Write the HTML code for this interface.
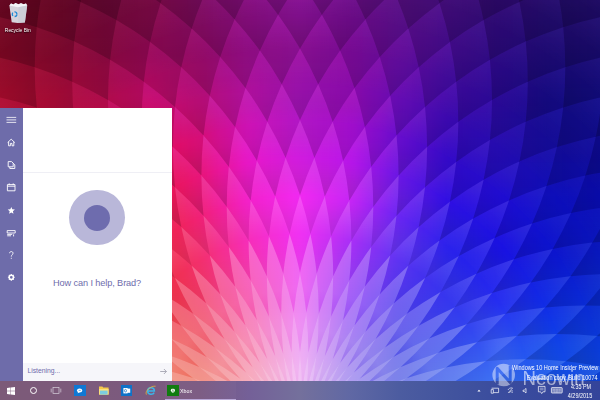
<!DOCTYPE html>
<html><head><meta charset="utf-8"><title>Desktop</title>
<style>
html,body{margin:0;padding:0;background:#000;}
body{width:600px;height:400px;overflow:hidden;position:relative;font-family:"Liberation Sans",sans-serif;}
#d{position:absolute;left:0;top:0;width:600px;height:400px;overflow:hidden;}
.a{position:absolute;}
.t{position:absolute;white-space:nowrap;line-height:1;}
</style></head><body><div id="d">
<svg width="600" height="400" viewBox="0 0 600 400" style="position:absolute;left:0;top:0">
<defs><filter id="bl" color-interpolation-filters="sRGB" x="-10%" y="-10%" width="120%" height="120%"><feGaussianBlur stdDeviation="9"/></filter>
<radialGradient id="gn0" gradientUnits="userSpaceOnUse" cx="300" cy="432.5" r="768.00"><stop offset="0.0523" stop-color="#fff" stop-opacity="0.000"/><stop offset="0.0836" stop-color="#fff" stop-opacity="0.233"/><stop offset="0.1564" stop-color="#fff" stop-opacity="0.389"/><stop offset="0.1564" stop-color="#fff" stop-opacity="0.000"/><stop offset="0.1871" stop-color="#fff" stop-opacity="0.162"/><stop offset="0.2588" stop-color="#fff" stop-opacity="0.270"/><stop offset="0.2588" stop-color="#000" stop-opacity="0.114"/><stop offset="0.3086" stop-color="#000" stop-opacity="0.000"/><stop offset="0.3086" stop-color="#fff" stop-opacity="0.000"/><stop offset="0.3584" stop-color="#fff" stop-opacity="0.146"/><stop offset="0.3584" stop-color="#000" stop-opacity="0.200"/><stop offset="0.4062" stop-color="#000" stop-opacity="0.000"/><stop offset="0.4062" stop-color="#fff" stop-opacity="0.000"/><stop offset="0.4540" stop-color="#fff" stop-opacity="0.064"/><stop offset="0.4540" stop-color="#000" stop-opacity="0.200"/><stop offset="0.4993" stop-color="#000" stop-opacity="0.000"/><stop offset="0.4993" stop-color="#fff" stop-opacity="0.000"/><stop offset="0.5446" stop-color="#fff" stop-opacity="0.030"/><stop offset="0.5446" stop-color="#000" stop-opacity="0.200"/><stop offset="0.5870" stop-color="#000" stop-opacity="0.000"/><stop offset="0.5870" stop-color="#fff" stop-opacity="0.000"/><stop offset="0.6293" stop-color="#fff" stop-opacity="0.030"/><stop offset="0.6293" stop-color="#000" stop-opacity="0.200"/><stop offset="0.6682" stop-color="#000" stop-opacity="0.000"/><stop offset="0.6682" stop-color="#fff" stop-opacity="0.000"/><stop offset="0.7071" stop-color="#fff" stop-opacity="0.030"/><stop offset="0.7071" stop-color="#000" stop-opacity="0.200"/><stop offset="0.7421" stop-color="#000" stop-opacity="0.000"/><stop offset="0.7421" stop-color="#fff" stop-opacity="0.000"/><stop offset="0.7771" stop-color="#fff" stop-opacity="0.030"/><stop offset="0.7771" stop-color="#000" stop-opacity="0.200"/><stop offset="0.8079" stop-color="#000" stop-opacity="0.000"/><stop offset="0.8079" stop-color="#fff" stop-opacity="0.000"/><stop offset="0.8387" stop-color="#fff" stop-opacity="0.030"/><stop offset="0.8387" stop-color="#000" stop-opacity="0.200"/><stop offset="0.8648" stop-color="#000" stop-opacity="0.000"/><stop offset="0.8648" stop-color="#fff" stop-opacity="0.000"/><stop offset="0.8910" stop-color="#fff" stop-opacity="0.030"/><stop offset="0.8910" stop-color="#000" stop-opacity="0.200"/><stop offset="0.9123" stop-color="#000" stop-opacity="0.000"/><stop offset="0.9123" stop-color="#fff" stop-opacity="0.000"/><stop offset="0.9336" stop-color="#fff" stop-opacity="0.030"/><stop offset="0.9336" stop-color="#000" stop-opacity="0.200"/><stop offset="0.9498" stop-color="#000" stop-opacity="0.000"/><stop offset="0.9498" stop-color="#fff" stop-opacity="0.000"/><stop offset="0.9659" stop-color="#fff" stop-opacity="0.030"/><stop offset="0.9659" stop-color="#000" stop-opacity="0.200"/><stop offset="0.9768" stop-color="#000" stop-opacity="0.000"/><stop offset="0.9768" stop-color="#fff" stop-opacity="0.000"/><stop offset="0.9877" stop-color="#fff" stop-opacity="0.030"/><stop offset="0.9877" stop-color="#000" stop-opacity="0.200"/><stop offset="0.9932" stop-color="#000" stop-opacity="0.000"/><stop offset="0.9932" stop-color="#fff" stop-opacity="0.000"/><stop offset="0.9986" stop-color="#fff" stop-opacity="0.030"/></radialGradient>
<radialGradient id="go0" gradientUnits="userSpaceOnUse" cx="300" cy="432.5" r="768.00"><stop offset="0.0523" stop-color="#fff" stop-opacity="0.000"/><stop offset="0.1044" stop-color="#fff" stop-opacity="0.000"/><stop offset="0.1564" stop-color="#fff" stop-opacity="0.000"/><stop offset="0.1564" stop-color="#fff" stop-opacity="0.000"/><stop offset="0.2076" stop-color="#fff" stop-opacity="0.000"/><stop offset="0.2588" stop-color="#fff" stop-opacity="0.000"/><stop offset="0.2588" stop-color="#fff" stop-opacity="0.000"/><stop offset="0.3086" stop-color="#fff" stop-opacity="0.000"/><stop offset="0.3584" stop-color="#fff" stop-opacity="0.090"/><stop offset="0.3584" stop-color="#fff" stop-opacity="0.000"/><stop offset="0.4062" stop-color="#fff" stop-opacity="0.000"/><stop offset="0.4540" stop-color="#fff" stop-opacity="0.200"/><stop offset="0.4540" stop-color="#fff" stop-opacity="0.000"/><stop offset="0.4993" stop-color="#fff" stop-opacity="0.000"/><stop offset="0.5446" stop-color="#fff" stop-opacity="0.200"/><stop offset="0.5446" stop-color="#fff" stop-opacity="0.000"/><stop offset="0.5870" stop-color="#fff" stop-opacity="0.000"/><stop offset="0.6293" stop-color="#fff" stop-opacity="0.200"/><stop offset="0.6293" stop-color="#fff" stop-opacity="0.000"/><stop offset="0.6682" stop-color="#fff" stop-opacity="0.000"/><stop offset="0.7071" stop-color="#fff" stop-opacity="0.200"/><stop offset="0.7071" stop-color="#fff" stop-opacity="0.000"/><stop offset="0.7421" stop-color="#fff" stop-opacity="0.000"/><stop offset="0.7771" stop-color="#fff" stop-opacity="0.200"/><stop offset="0.7771" stop-color="#fff" stop-opacity="0.000"/><stop offset="0.8079" stop-color="#fff" stop-opacity="0.000"/><stop offset="0.8387" stop-color="#fff" stop-opacity="0.200"/><stop offset="0.8387" stop-color="#fff" stop-opacity="0.000"/><stop offset="0.8648" stop-color="#fff" stop-opacity="0.000"/><stop offset="0.8910" stop-color="#fff" stop-opacity="0.200"/><stop offset="0.8910" stop-color="#fff" stop-opacity="0.000"/><stop offset="0.9123" stop-color="#fff" stop-opacity="0.000"/><stop offset="0.9336" stop-color="#fff" stop-opacity="0.200"/><stop offset="0.9336" stop-color="#fff" stop-opacity="0.000"/><stop offset="0.9498" stop-color="#fff" stop-opacity="0.000"/><stop offset="0.9659" stop-color="#fff" stop-opacity="0.200"/><stop offset="0.9659" stop-color="#fff" stop-opacity="0.000"/><stop offset="0.9768" stop-color="#fff" stop-opacity="0.000"/><stop offset="0.9877" stop-color="#fff" stop-opacity="0.200"/><stop offset="0.9877" stop-color="#fff" stop-opacity="0.000"/><stop offset="0.9932" stop-color="#fff" stop-opacity="0.000"/><stop offset="0.9986" stop-color="#fff" stop-opacity="0.200"/></radialGradient>
<path id="c0" d="M302.1,392.4A384,384,0,0,1,308.4,352.7A384,384,0,0,0,306.3,312.5A384,384,0,0,0,300.0,352.2A384,384,0,0,1,302.1,392.4ZM306.3,392.8A384,384,0,0,1,316.7,354.0A384,384,0,0,0,318.8,313.8A384,384,0,0,0,308.4,352.7A384,384,0,0,1,306.3,392.8ZM310.4,393.7A384,384,0,0,1,324.8,356.2A384,384,0,0,0,331.1,316.5A384,384,0,0,0,316.7,354.0A384,384,0,0,1,310.4,393.7ZM314.4,395.0A384,384,0,0,1,332.7,359.2A384,384,0,0,0,343.1,320.3A384,384,0,0,0,324.8,356.2A384,384,0,0,1,314.4,395.0ZM318.2,396.7A384,384,0,0,1,340.1,363.0A384,384,0,0,0,354.5,325.5A384,384,0,0,0,332.7,359.2A384,384,0,0,1,318.2,396.7ZM321.9,398.8A384,384,0,0,1,347.2,367.6A384,384,0,0,0,365.4,331.7A384,384,0,0,0,340.1,363.0A384,384,0,0,1,321.9,398.8ZM325.3,401.3A384,384,0,0,1,353.7,372.8A384,384,0,0,0,375.6,339.1A384,384,0,0,0,347.2,367.6A384,384,0,0,1,325.3,401.3ZM328.4,404.1A384,384,0,0,1,359.7,378.8A384,384,0,0,0,385.0,347.5A384,384,0,0,0,353.7,372.8A384,384,0,0,1,328.4,404.1ZM331.2,407.2A384,384,0,0,1,364.9,385.3A384,384,0,0,0,393.4,356.9A384,384,0,0,0,359.7,378.8A384,384,0,0,1,331.2,407.2ZM333.7,410.6A384,384,0,0,1,369.5,392.4A384,384,0,0,0,400.8,367.1A384,384,0,0,0,364.9,385.3A384,384,0,0,1,333.7,410.6ZM335.8,414.3A384,384,0,0,1,373.3,399.8A384,384,0,0,0,407.0,378.0A384,384,0,0,0,369.5,392.4A384,384,0,0,1,335.8,414.3ZM264.2,414.3A384,384,0,0,1,230.5,392.4A384,384,0,0,0,193.0,378.0A384,384,0,0,0,226.7,399.8A384,384,0,0,1,264.2,414.3ZM266.3,410.6A384,384,0,0,1,235.1,385.3A384,384,0,0,0,199.2,367.1A384,384,0,0,0,230.5,392.4A384,384,0,0,1,266.3,410.6ZM268.8,407.2A384,384,0,0,1,240.3,378.8A384,384,0,0,0,206.6,356.9A384,384,0,0,0,235.1,385.3A384,384,0,0,1,268.8,407.2ZM271.6,404.1A384,384,0,0,1,246.3,372.8A384,384,0,0,0,215.0,347.5A384,384,0,0,0,240.3,378.8A384,384,0,0,1,271.6,404.1ZM274.7,401.3A384,384,0,0,1,252.8,367.6A384,384,0,0,0,224.4,339.1A384,384,0,0,0,246.3,372.8A384,384,0,0,1,274.7,401.3ZM278.1,398.8A384,384,0,0,1,259.9,363.0A384,384,0,0,0,234.6,331.7A384,384,0,0,0,252.8,367.6A384,384,0,0,1,278.1,398.8ZM281.8,396.7A384,384,0,0,1,267.3,359.2A384,384,0,0,0,245.5,325.5A384,384,0,0,0,259.9,363.0A384,384,0,0,1,281.8,396.7ZM285.6,395.0A384,384,0,0,1,275.2,356.2A384,384,0,0,0,256.9,320.3A384,384,0,0,0,267.3,359.2A384,384,0,0,1,285.6,395.0ZM289.6,393.7A384,384,0,0,1,283.3,354.0A384,384,0,0,0,268.9,316.5A384,384,0,0,0,275.2,356.2A384,384,0,0,1,289.6,393.7ZM293.7,392.8A384,384,0,0,1,291.6,352.7A384,384,0,0,0,281.2,313.8A384,384,0,0,0,283.3,354.0A384,384,0,0,1,293.7,392.8ZM297.9,392.4A384,384,0,0,1,300.0,352.2A384,384,0,0,0,293.7,312.5A384,384,0,0,0,291.6,352.7A384,384,0,0,1,297.9,392.4ZM306.3,312.5A384,384,0,0,1,316.7,273.7A384,384,0,0,0,310.4,234.0A384,384,0,0,0,300.0,272.8A384,384,0,0,1,306.3,312.5ZM318.8,313.8A384,384,0,0,1,333.2,276.3A384,384,0,0,0,331.1,236.2A384,384,0,0,0,316.7,273.7A384,384,0,0,1,318.8,313.8ZM331.1,316.5A384,384,0,0,1,349.3,280.6A384,384,0,0,0,351.4,240.5A384,384,0,0,0,333.2,276.3A384,384,0,0,1,331.1,316.5ZM343.1,320.3A384,384,0,0,1,364.9,286.6A384,384,0,0,0,371.2,246.9A384,384,0,0,0,349.3,280.6A384,384,0,0,1,343.1,320.3ZM354.5,325.5A384,384,0,0,1,379.8,294.2A384,384,0,0,0,390.2,255.4A384,384,0,0,0,364.9,286.6A384,384,0,0,1,354.5,325.5ZM365.4,331.7A384,384,0,0,1,393.9,303.3A384,384,0,0,0,408.3,265.8A384,384,0,0,0,379.8,294.2A384,384,0,0,1,365.4,331.7ZM375.6,339.1A384,384,0,0,1,406.8,313.8A384,384,0,0,0,425.1,278.0A384,384,0,0,0,393.9,303.3A384,384,0,0,1,375.6,339.1ZM385.0,347.5A384,384,0,0,1,418.7,325.7A384,384,0,0,0,440.6,291.9A384,384,0,0,0,406.8,313.8A384,384,0,0,1,385.0,347.5ZM393.4,356.9A384,384,0,0,1,429.2,338.6A384,384,0,0,0,454.5,307.4A384,384,0,0,0,418.7,325.7A384,384,0,0,1,393.4,356.9ZM400.8,367.1A384,384,0,0,1,438.3,352.7A384,384,0,0,0,466.7,324.2A384,384,0,0,0,429.2,338.6A384,384,0,0,1,400.8,367.1ZM407.0,378.0A384,384,0,0,1,445.9,367.6A384,384,0,0,0,477.1,342.3A384,384,0,0,0,438.3,352.7A384,384,0,0,1,407.0,378.0ZM412.2,389.4A384,384,0,0,1,451.9,383.2A384,384,0,0,0,485.6,361.3A384,384,0,0,0,445.9,367.6A384,384,0,0,1,412.2,389.4ZM416.0,401.4A384,384,0,0,1,456.2,399.3A384,384,0,0,0,492.0,381.1A384,384,0,0,0,451.9,383.2A384,384,0,0,1,416.0,401.4ZM184.0,401.4A384,384,0,0,1,148.1,383.2A384,384,0,0,0,108.0,381.1A384,384,0,0,0,143.8,399.3A384,384,0,0,1,184.0,401.4ZM187.8,389.4A384,384,0,0,1,154.1,367.6A384,384,0,0,0,114.4,361.3A384,384,0,0,0,148.1,383.2A384,384,0,0,1,187.8,389.4ZM193.0,378.0A384,384,0,0,1,161.7,352.7A384,384,0,0,0,122.9,342.3A384,384,0,0,0,154.1,367.6A384,384,0,0,1,193.0,378.0ZM199.2,367.1A384,384,0,0,1,170.8,338.6A384,384,0,0,0,133.3,324.2A384,384,0,0,0,161.7,352.7A384,384,0,0,1,199.2,367.1ZM206.6,356.9A384,384,0,0,1,181.3,325.7A384,384,0,0,0,145.5,307.4A384,384,0,0,0,170.8,338.6A384,384,0,0,1,206.6,356.9ZM215.0,347.5A384,384,0,0,1,193.2,313.8A384,384,0,0,0,159.4,291.9A384,384,0,0,0,181.3,325.7A384,384,0,0,1,215.0,347.5ZM224.4,339.1A384,384,0,0,1,206.1,303.3A384,384,0,0,0,174.9,278.0A384,384,0,0,0,193.2,313.8A384,384,0,0,1,224.4,339.1ZM234.6,331.7A384,384,0,0,1,220.2,294.2A384,384,0,0,0,191.7,265.8A384,384,0,0,0,206.1,303.3A384,384,0,0,1,234.6,331.7ZM245.5,325.5A384,384,0,0,1,235.1,286.6A384,384,0,0,0,209.8,255.4A384,384,0,0,0,220.2,294.2A384,384,0,0,1,245.5,325.5ZM256.9,320.3A384,384,0,0,1,250.7,280.6A384,384,0,0,0,228.8,246.9A384,384,0,0,0,235.1,286.6A384,384,0,0,1,256.9,320.3ZM268.9,316.5A384,384,0,0,1,266.8,276.3A384,384,0,0,0,248.6,240.5A384,384,0,0,0,250.7,280.6A384,384,0,0,1,268.9,316.5ZM281.2,313.8A384,384,0,0,1,283.3,273.7A384,384,0,0,0,268.9,236.2A384,384,0,0,0,266.8,276.3A384,384,0,0,1,281.2,313.8ZM293.7,312.5A384,384,0,0,1,300.0,272.8A384,384,0,0,0,289.6,234.0A384,384,0,0,0,283.3,273.7A384,384,0,0,1,293.7,312.5ZM310.4,234.0A384,384,0,0,1,324.8,196.5A384,384,0,0,0,314.4,157.7A384,384,0,0,0,300.0,195.2A384,384,0,0,1,310.4,234.0ZM331.1,236.2A384,384,0,0,1,349.3,200.4A384,384,0,0,0,343.1,160.7A384,384,0,0,0,324.8,196.5A384,384,0,0,1,331.1,236.2ZM351.4,240.5A384,384,0,0,1,373.3,206.8A384,384,0,0,0,371.2,166.7A384,384,0,0,0,349.3,200.4A384,384,0,0,1,351.4,240.5ZM371.2,246.9A384,384,0,0,1,396.5,215.7A384,384,0,0,0,398.6,175.6A384,384,0,0,0,373.3,206.8A384,384,0,0,1,371.2,246.9ZM390.2,255.4A384,384,0,0,1,418.7,227.0A384,384,0,0,0,425.0,187.3A384,384,0,0,0,396.5,215.7A384,384,0,0,1,390.2,255.4ZM408.3,265.8A384,384,0,0,1,439.5,240.5A384,384,0,0,0,449.9,201.7A384,384,0,0,0,418.7,227.0A384,384,0,0,1,408.3,265.8ZM425.1,278.0A384,384,0,0,1,458.8,256.1A384,384,0,0,0,473.2,218.6A384,384,0,0,0,439.5,240.5A384,384,0,0,1,425.1,278.0ZM440.6,291.9A384,384,0,0,1,476.4,273.7A384,384,0,0,0,494.6,237.9A384,384,0,0,0,458.8,256.1A384,384,0,0,1,440.6,291.9ZM454.5,307.4A384,384,0,0,1,492.0,293.0A384,384,0,0,0,513.9,259.3A384,384,0,0,0,476.4,273.7A384,384,0,0,1,454.5,307.4ZM466.7,324.2A384,384,0,0,1,505.5,313.8A384,384,0,0,0,530.8,282.6A384,384,0,0,0,492.0,293.0A384,384,0,0,1,466.7,324.2ZM477.1,342.3A384,384,0,0,1,516.8,336.0A384,384,0,0,0,545.2,307.5A384,384,0,0,0,505.5,313.8A384,384,0,0,1,477.1,342.3ZM485.6,361.3A384,384,0,0,1,525.7,359.2A384,384,0,0,0,556.9,333.9A384,384,0,0,0,516.8,336.0A384,384,0,0,1,485.6,361.3ZM492.0,381.1A384,384,0,0,1,532.1,383.2A384,384,0,0,0,565.8,361.3A384,384,0,0,0,525.7,359.2A384,384,0,0,1,492.0,381.1ZM108.0,381.1A384,384,0,0,1,74.3,359.2A384,384,0,0,0,34.2,361.3A384,384,0,0,0,67.9,383.2A384,384,0,0,1,108.0,381.1ZM114.4,361.3A384,384,0,0,1,83.2,336.0A384,384,0,0,0,43.1,333.9A384,384,0,0,0,74.3,359.2A384,384,0,0,1,114.4,361.3ZM122.9,342.3A384,384,0,0,1,94.5,313.8A384,384,0,0,0,54.8,307.5A384,384,0,0,0,83.2,336.0A384,384,0,0,1,122.9,342.3ZM133.3,324.2A384,384,0,0,1,108.0,293.0A384,384,0,0,0,69.2,282.6A384,384,0,0,0,94.5,313.8A384,384,0,0,1,133.3,324.2ZM145.5,307.4A384,384,0,0,1,123.6,273.7A384,384,0,0,0,86.1,259.3A384,384,0,0,0,108.0,293.0A384,384,0,0,1,145.5,307.4ZM159.4,291.9A384,384,0,0,1,141.2,256.1A384,384,0,0,0,105.4,237.9A384,384,0,0,0,123.6,273.7A384,384,0,0,1,159.4,291.9ZM174.9,278.0A384,384,0,0,1,160.5,240.5A384,384,0,0,0,126.8,218.6A384,384,0,0,0,141.2,256.1A384,384,0,0,1,174.9,278.0ZM191.7,265.8A384,384,0,0,1,181.3,227.0A384,384,0,0,0,150.1,201.7A384,384,0,0,0,160.5,240.5A384,384,0,0,1,191.7,265.8ZM209.8,255.4A384,384,0,0,1,203.5,215.7A384,384,0,0,0,175.0,187.3A384,384,0,0,0,181.3,227.0A384,384,0,0,1,209.8,255.4ZM228.8,246.9A384,384,0,0,1,226.7,206.8A384,384,0,0,0,201.4,175.6A384,384,0,0,0,203.5,215.7A384,384,0,0,1,228.8,246.9ZM248.6,240.5A384,384,0,0,1,250.7,200.4A384,384,0,0,0,228.8,166.7A384,384,0,0,0,226.7,206.8A384,384,0,0,1,248.6,240.5ZM268.9,236.2A384,384,0,0,1,275.2,196.5A384,384,0,0,0,256.9,160.7A384,384,0,0,0,250.7,200.4A384,384,0,0,1,268.9,236.2ZM289.6,234.0A384,384,0,0,1,300.0,195.2A384,384,0,0,0,285.6,157.7A384,384,0,0,0,275.2,196.5A384,384,0,0,1,289.6,234.0ZM314.4,157.7A384,384,0,0,1,332.7,121.8A384,384,0,0,0,318.2,84.3A384,384,0,0,0,300.0,120.1A384,384,0,0,1,314.4,157.7ZM343.1,160.7A384,384,0,0,1,364.9,127.0A384,384,0,0,0,354.5,88.1A384,384,0,0,0,332.7,121.8A384,384,0,0,1,343.1,160.7ZM371.2,166.7A384,384,0,0,1,396.5,135.4A384,384,0,0,0,390.2,95.7A384,384,0,0,0,364.9,127.0A384,384,0,0,1,371.2,166.7ZM398.6,175.6A384,384,0,0,1,427.1,147.1A384,384,0,0,0,425.0,107.0A384,384,0,0,0,396.5,135.4A384,384,0,0,1,398.6,175.6ZM425.0,187.3A384,384,0,0,1,456.2,162.0A384,384,0,0,0,458.3,121.8A384,384,0,0,0,427.1,147.1A384,384,0,0,1,425.0,187.3ZM449.9,201.7A384,384,0,0,1,483.6,179.8A384,384,0,0,0,489.9,140.1A384,384,0,0,0,456.2,162.0A384,384,0,0,1,449.9,201.7ZM473.2,218.6A384,384,0,0,1,509.0,200.4A384,384,0,0,0,519.4,161.5A384,384,0,0,0,483.6,179.8A384,384,0,0,1,473.2,218.6ZM494.6,237.9A384,384,0,0,1,532.1,223.5A384,384,0,0,0,546.5,186.0A384,384,0,0,0,509.0,200.4A384,384,0,0,1,494.6,237.9ZM513.9,259.3A384,384,0,0,1,552.7,248.9A384,384,0,0,0,571.0,213.1A384,384,0,0,0,532.1,223.5A384,384,0,0,1,513.9,259.3ZM530.8,282.6A384,384,0,0,1,570.5,276.3A384,384,0,0,0,592.4,242.6A384,384,0,0,0,552.7,248.9A384,384,0,0,1,530.8,282.6ZM545.2,307.5A384,384,0,0,1,585.4,305.4A384,384,0,0,0,610.7,274.2A384,384,0,0,0,570.5,276.3A384,384,0,0,1,545.2,307.5ZM556.9,333.9A384,384,0,0,1,597.1,336.0A384,384,0,0,0,625.5,307.5A384,384,0,0,0,585.4,305.4A384,384,0,0,1,556.9,333.9ZM565.8,361.3A384,384,0,0,1,605.5,367.6A384,384,0,0,0,636.8,342.3A384,384,0,0,0,597.1,336.0A384,384,0,0,1,565.8,361.3ZM571.8,389.4A384,384,0,0,1,610.7,399.8A384,384,0,0,0,644.4,378.0A384,384,0,0,0,605.5,367.6A384,384,0,0,1,571.8,389.4ZM28.2,389.4A384,384,0,0,1,-5.5,367.6A384,384,0,0,0,-44.4,378.0A384,384,0,0,0,-10.7,399.8A384,384,0,0,1,28.2,389.4ZM34.2,361.3A384,384,0,0,1,2.9,336.0A384,384,0,0,0,-36.8,342.3A384,384,0,0,0,-5.5,367.6A384,384,0,0,1,34.2,361.3ZM43.1,333.9A384,384,0,0,1,14.6,305.4A384,384,0,0,0,-25.5,307.5A384,384,0,0,0,2.9,336.0A384,384,0,0,1,43.1,333.9ZM54.8,307.5A384,384,0,0,1,29.5,276.3A384,384,0,0,0,-10.7,274.2A384,384,0,0,0,14.6,305.4A384,384,0,0,1,54.8,307.5ZM69.2,282.6A384,384,0,0,1,47.3,248.9A384,384,0,0,0,7.6,242.6A384,384,0,0,0,29.5,276.3A384,384,0,0,1,69.2,282.6ZM86.1,259.3A384,384,0,0,1,67.9,223.5A384,384,0,0,0,29.0,213.1A384,384,0,0,0,47.3,248.9A384,384,0,0,1,86.1,259.3ZM105.4,237.9A384,384,0,0,1,91.0,200.4A384,384,0,0,0,53.5,186.0A384,384,0,0,0,67.9,223.5A384,384,0,0,1,105.4,237.9ZM126.8,218.6A384,384,0,0,1,116.4,179.8A384,384,0,0,0,80.6,161.5A384,384,0,0,0,91.0,200.4A384,384,0,0,1,126.8,218.6ZM150.1,201.7A384,384,0,0,1,143.8,162.0A384,384,0,0,0,110.1,140.1A384,384,0,0,0,116.4,179.8A384,384,0,0,1,150.1,201.7ZM175.0,187.3A384,384,0,0,1,172.9,147.1A384,384,0,0,0,141.7,121.8A384,384,0,0,0,143.8,162.0A384,384,0,0,1,175.0,187.3ZM201.4,175.6A384,384,0,0,1,203.5,135.4A384,384,0,0,0,175.0,107.0A384,384,0,0,0,172.9,147.1A384,384,0,0,1,201.4,175.6ZM228.8,166.7A384,384,0,0,1,235.1,127.0A384,384,0,0,0,209.8,95.7A384,384,0,0,0,203.5,135.4A384,384,0,0,1,228.8,166.7ZM256.9,160.7A384,384,0,0,1,267.3,121.8A384,384,0,0,0,245.5,88.1A384,384,0,0,0,235.1,127.0A384,384,0,0,1,256.9,160.7ZM285.6,157.7A384,384,0,0,1,300.0,120.1A384,384,0,0,0,281.8,84.3A384,384,0,0,0,267.3,121.8A384,384,0,0,1,285.6,157.7ZM318.2,84.3A384,384,0,0,1,340.1,50.6A384,384,0,0,0,321.9,14.8A384,384,0,0,0,300.0,48.5A384,384,0,0,1,318.2,84.3ZM354.5,88.1A384,384,0,0,1,379.8,56.9A384,384,0,0,0,365.4,19.4A384,384,0,0,0,340.1,50.6A384,384,0,0,1,354.5,88.1ZM390.2,95.7A384,384,0,0,1,418.7,67.3A384,384,0,0,0,408.3,28.5A384,384,0,0,0,379.8,56.9A384,384,0,0,1,390.2,95.7ZM425.0,107.0A384,384,0,0,1,456.2,81.7A384,384,0,0,0,449.9,42.0A384,384,0,0,0,418.7,67.3A384,384,0,0,1,425.0,107.0ZM458.3,121.8A384,384,0,0,1,492.0,99.9A384,384,0,0,0,489.9,59.8A384,384,0,0,0,456.2,81.7A384,384,0,0,1,458.3,121.8ZM489.9,140.1A384,384,0,0,1,525.7,121.8A384,384,0,0,0,527.8,81.7A384,384,0,0,0,492.0,99.9A384,384,0,0,1,489.9,140.1ZM519.4,161.5A384,384,0,0,1,556.9,147.1A384,384,0,0,0,563.2,107.4A384,384,0,0,0,525.7,121.8A384,384,0,0,1,519.4,161.5ZM546.5,186.0A384,384,0,0,1,585.4,175.6A384,384,0,0,0,595.8,136.7A384,384,0,0,0,556.9,147.1A384,384,0,0,1,546.5,186.0ZM571.0,213.1A384,384,0,0,1,610.7,206.8A384,384,0,0,0,625.1,169.3A384,384,0,0,0,585.4,175.6A384,384,0,0,1,571.0,213.1ZM592.4,242.6A384,384,0,0,1,632.6,240.5A384,384,0,0,0,650.8,204.7A384,384,0,0,0,610.7,206.8A384,384,0,0,1,592.4,242.6ZM7.6,242.6A384,384,0,0,1,-10.7,206.8A384,384,0,0,0,-50.8,204.7A384,384,0,0,0,-32.6,240.5A384,384,0,0,1,7.6,242.6ZM29.0,213.1A384,384,0,0,1,14.6,175.6A384,384,0,0,0,-25.1,169.3A384,384,0,0,0,-10.7,206.8A384,384,0,0,1,29.0,213.1ZM53.5,186.0A384,384,0,0,1,43.1,147.1A384,384,0,0,0,4.2,136.7A384,384,0,0,0,14.6,175.6A384,384,0,0,1,53.5,186.0ZM80.6,161.5A384,384,0,0,1,74.3,121.8A384,384,0,0,0,36.8,107.4A384,384,0,0,0,43.1,147.1A384,384,0,0,1,80.6,161.5ZM110.1,140.1A384,384,0,0,1,108.0,99.9A384,384,0,0,0,72.2,81.7A384,384,0,0,0,74.3,121.8A384,384,0,0,1,110.1,140.1ZM141.7,121.8A384,384,0,0,1,143.8,81.7A384,384,0,0,0,110.1,59.8A384,384,0,0,0,108.0,99.9A384,384,0,0,1,141.7,121.8ZM175.0,107.0A384,384,0,0,1,181.3,67.3A384,384,0,0,0,150.1,42.0A384,384,0,0,0,143.8,81.7A384,384,0,0,1,175.0,107.0ZM209.8,95.7A384,384,0,0,1,220.2,56.9A384,384,0,0,0,191.7,28.5A384,384,0,0,0,181.3,67.3A384,384,0,0,1,209.8,95.7ZM245.5,88.1A384,384,0,0,1,259.9,50.6A384,384,0,0,0,234.6,19.4A384,384,0,0,0,220.2,56.9A384,384,0,0,1,245.5,88.1ZM281.8,84.3A384,384,0,0,1,300.0,48.5A384,384,0,0,0,278.1,14.8A384,384,0,0,0,259.9,50.6A384,384,0,0,1,281.8,84.3ZM321.9,14.8A384,384,0,0,1,347.2,-16.4A384,384,0,0,0,325.3,-50.2A384,384,0,0,0,300.0,-18.9A384,384,0,0,1,321.9,14.8ZM365.4,19.4A384,384,0,0,1,393.9,-9.1A384,384,0,0,0,375.6,-44.9A384,384,0,0,0,347.2,-16.4A384,384,0,0,1,365.4,19.4ZM408.3,28.5A384,384,0,0,1,439.5,3.2A384,384,0,0,0,425.1,-34.3A384,384,0,0,0,393.9,-9.1A384,384,0,0,1,408.3,28.5ZM449.9,42.0A384,384,0,0,1,483.6,20.1A384,384,0,0,0,473.2,-18.7A384,384,0,0,0,439.5,3.2A384,384,0,0,1,449.9,42.0ZM489.9,59.8A384,384,0,0,1,525.7,41.6A384,384,0,0,0,519.4,1.9A384,384,0,0,0,483.6,20.1A384,384,0,0,1,489.9,59.8ZM527.8,81.7A384,384,0,0,1,565.3,67.3A384,384,0,0,0,563.2,27.2A384,384,0,0,0,525.7,41.6A384,384,0,0,1,527.8,81.7ZM563.2,107.4A384,384,0,0,1,602.1,97.0A384,384,0,0,0,604.2,56.9A384,384,0,0,0,565.3,67.3A384,384,0,0,1,563.2,107.4ZM595.8,136.7A384,384,0,0,1,635.5,130.4A384,384,0,0,0,641.8,90.7A384,384,0,0,0,602.1,97.0A384,384,0,0,1,595.8,136.7ZM4.2,136.7A384,384,0,0,1,-2.1,97.0A384,384,0,0,0,-41.8,90.7A384,384,0,0,0,-35.5,130.4A384,384,0,0,1,4.2,136.7ZM36.8,107.4A384,384,0,0,1,34.7,67.3A384,384,0,0,0,-4.2,56.9A384,384,0,0,0,-2.1,97.0A384,384,0,0,1,36.8,107.4ZM72.2,81.7A384,384,0,0,1,74.3,41.6A384,384,0,0,0,36.8,27.2A384,384,0,0,0,34.7,67.3A384,384,0,0,1,72.2,81.7ZM110.1,59.8A384,384,0,0,1,116.4,20.1A384,384,0,0,0,80.6,1.9A384,384,0,0,0,74.3,41.6A384,384,0,0,1,110.1,59.8ZM150.1,42.0A384,384,0,0,1,160.5,3.2A384,384,0,0,0,126.8,-18.7A384,384,0,0,0,116.4,20.1A384,384,0,0,1,150.1,42.0ZM191.7,28.5A384,384,0,0,1,206.1,-9.1A384,384,0,0,0,174.9,-34.3A384,384,0,0,0,160.5,3.2A384,384,0,0,1,191.7,28.5ZM234.6,19.4A384,384,0,0,1,252.8,-16.4A384,384,0,0,0,224.4,-44.9A384,384,0,0,0,206.1,-9.1A384,384,0,0,1,234.6,19.4ZM278.1,14.8A384,384,0,0,1,300.0,-18.9A384,384,0,0,0,274.7,-50.2A384,384,0,0,0,252.8,-16.4A384,384,0,0,1,278.1,14.8ZM519.4,1.9A384,384,0,0,1,556.9,-12.5A384,384,0,0,0,546.5,-51.4A384,384,0,0,0,509.0,-37.0A384,384,0,0,1,519.4,1.9ZM563.2,27.2A384,384,0,0,1,602.1,16.8A384,384,0,0,0,595.8,-22.9A384,384,0,0,0,556.9,-12.5A384,384,0,0,1,563.2,27.2ZM36.8,27.2A384,384,0,0,1,43.1,-12.5A384,384,0,0,0,4.2,-22.9A384,384,0,0,0,-2.1,16.8A384,384,0,0,1,36.8,27.2ZM80.6,1.9A384,384,0,0,1,91.0,-37.0A384,384,0,0,0,53.5,-51.4A384,384,0,0,0,43.1,-12.5A384,384,0,0,1,80.6,1.9Z"/>
<radialGradient id="gn1" gradientUnits="userSpaceOnUse" cx="300" cy="432.5" r="768.00"><stop offset="0.0000" stop-color="#fff" stop-opacity="0.000"/><stop offset="0.0314" stop-color="#fff" stop-opacity="0.240"/><stop offset="0.1045" stop-color="#fff" stop-opacity="0.400"/><stop offset="0.1045" stop-color="#fff" stop-opacity="0.000"/><stop offset="0.1355" stop-color="#fff" stop-opacity="0.215"/><stop offset="0.2079" stop-color="#fff" stop-opacity="0.358"/><stop offset="0.2079" stop-color="#000" stop-opacity="0.037"/><stop offset="0.2585" stop-color="#000" stop-opacity="0.000"/><stop offset="0.2585" stop-color="#fff" stop-opacity="0.000"/><stop offset="0.3090" stop-color="#fff" stop-opacity="0.191"/><stop offset="0.3090" stop-color="#000" stop-opacity="0.190"/><stop offset="0.3579" stop-color="#000" stop-opacity="0.000"/><stop offset="0.3579" stop-color="#fff" stop-opacity="0.000"/><stop offset="0.4067" stop-color="#fff" stop-opacity="0.104"/><stop offset="0.4067" stop-color="#000" stop-opacity="0.200"/><stop offset="0.4534" stop-color="#000" stop-opacity="0.000"/><stop offset="0.4534" stop-color="#fff" stop-opacity="0.000"/><stop offset="0.5000" stop-color="#fff" stop-opacity="0.030"/><stop offset="0.5000" stop-color="#000" stop-opacity="0.200"/><stop offset="0.5439" stop-color="#000" stop-opacity="0.000"/><stop offset="0.5439" stop-color="#fff" stop-opacity="0.000"/><stop offset="0.5878" stop-color="#fff" stop-opacity="0.030"/><stop offset="0.5878" stop-color="#000" stop-opacity="0.200"/><stop offset="0.6285" stop-color="#000" stop-opacity="0.000"/><stop offset="0.6285" stop-color="#fff" stop-opacity="0.000"/><stop offset="0.6691" stop-color="#fff" stop-opacity="0.030"/><stop offset="0.6691" stop-color="#000" stop-opacity="0.200"/><stop offset="0.7061" stop-color="#000" stop-opacity="0.000"/><stop offset="0.7061" stop-color="#fff" stop-opacity="0.000"/><stop offset="0.7431" stop-color="#fff" stop-opacity="0.030"/><stop offset="0.7431" stop-color="#000" stop-opacity="0.200"/><stop offset="0.7761" stop-color="#000" stop-opacity="0.000"/><stop offset="0.7761" stop-color="#fff" stop-opacity="0.000"/><stop offset="0.8090" stop-color="#fff" stop-opacity="0.030"/><stop offset="0.8090" stop-color="#000" stop-opacity="0.200"/><stop offset="0.8375" stop-color="#000" stop-opacity="0.000"/><stop offset="0.8375" stop-color="#fff" stop-opacity="0.000"/><stop offset="0.8660" stop-color="#fff" stop-opacity="0.030"/><stop offset="0.8660" stop-color="#000" stop-opacity="0.200"/><stop offset="0.8898" stop-color="#000" stop-opacity="0.000"/><stop offset="0.8898" stop-color="#fff" stop-opacity="0.000"/><stop offset="0.9135" stop-color="#fff" stop-opacity="0.030"/><stop offset="0.9135" stop-color="#000" stop-opacity="0.200"/><stop offset="0.9323" stop-color="#000" stop-opacity="0.000"/><stop offset="0.9323" stop-color="#fff" stop-opacity="0.000"/><stop offset="0.9511" stop-color="#fff" stop-opacity="0.030"/><stop offset="0.9511" stop-color="#000" stop-opacity="0.200"/><stop offset="0.9646" stop-color="#000" stop-opacity="0.000"/><stop offset="0.9646" stop-color="#fff" stop-opacity="0.000"/><stop offset="0.9781" stop-color="#fff" stop-opacity="0.030"/><stop offset="0.9781" stop-color="#000" stop-opacity="0.200"/><stop offset="0.9863" stop-color="#000" stop-opacity="0.000"/><stop offset="0.9863" stop-color="#fff" stop-opacity="0.000"/><stop offset="0.9945" stop-color="#fff" stop-opacity="0.030"/><stop offset="0.9945" stop-color="#000" stop-opacity="0.200"/><stop offset="0.9973" stop-color="#000" stop-opacity="0.000"/><stop offset="0.9973" stop-color="#fff" stop-opacity="0.000"/><stop offset="1.0000" stop-color="#fff" stop-opacity="0.030"/></radialGradient>
<radialGradient id="go1" gradientUnits="userSpaceOnUse" cx="300" cy="432.5" r="768.00"><stop offset="0.0000" stop-color="#fff" stop-opacity="0.000"/><stop offset="0.0523" stop-color="#fff" stop-opacity="0.000"/><stop offset="0.1045" stop-color="#fff" stop-opacity="0.000"/><stop offset="0.1045" stop-color="#fff" stop-opacity="0.000"/><stop offset="0.1562" stop-color="#fff" stop-opacity="0.000"/><stop offset="0.2079" stop-color="#fff" stop-opacity="0.000"/><stop offset="0.2079" stop-color="#fff" stop-opacity="0.000"/><stop offset="0.2585" stop-color="#fff" stop-opacity="0.000"/><stop offset="0.3090" stop-color="#fff" stop-opacity="0.015"/><stop offset="0.3090" stop-color="#fff" stop-opacity="0.000"/><stop offset="0.3579" stop-color="#fff" stop-opacity="0.000"/><stop offset="0.4067" stop-color="#fff" stop-opacity="0.165"/><stop offset="0.4067" stop-color="#fff" stop-opacity="0.000"/><stop offset="0.4534" stop-color="#fff" stop-opacity="0.000"/><stop offset="0.5000" stop-color="#fff" stop-opacity="0.200"/><stop offset="0.5000" stop-color="#fff" stop-opacity="0.000"/><stop offset="0.5439" stop-color="#fff" stop-opacity="0.000"/><stop offset="0.5878" stop-color="#fff" stop-opacity="0.200"/><stop offset="0.5878" stop-color="#fff" stop-opacity="0.000"/><stop offset="0.6285" stop-color="#fff" stop-opacity="0.000"/><stop offset="0.6691" stop-color="#fff" stop-opacity="0.200"/><stop offset="0.6691" stop-color="#fff" stop-opacity="0.000"/><stop offset="0.7061" stop-color="#fff" stop-opacity="0.000"/><stop offset="0.7431" stop-color="#fff" stop-opacity="0.200"/><stop offset="0.7431" stop-color="#fff" stop-opacity="0.000"/><stop offset="0.7761" stop-color="#fff" stop-opacity="0.000"/><stop offset="0.8090" stop-color="#fff" stop-opacity="0.200"/><stop offset="0.8090" stop-color="#fff" stop-opacity="0.000"/><stop offset="0.8375" stop-color="#fff" stop-opacity="0.000"/><stop offset="0.8660" stop-color="#fff" stop-opacity="0.200"/><stop offset="0.8660" stop-color="#fff" stop-opacity="0.000"/><stop offset="0.8898" stop-color="#fff" stop-opacity="0.000"/><stop offset="0.9135" stop-color="#fff" stop-opacity="0.200"/><stop offset="0.9135" stop-color="#fff" stop-opacity="0.000"/><stop offset="0.9323" stop-color="#fff" stop-opacity="0.000"/><stop offset="0.9511" stop-color="#fff" stop-opacity="0.200"/><stop offset="0.9511" stop-color="#fff" stop-opacity="0.000"/><stop offset="0.9646" stop-color="#fff" stop-opacity="0.000"/><stop offset="0.9781" stop-color="#fff" stop-opacity="0.200"/><stop offset="0.9781" stop-color="#fff" stop-opacity="0.000"/><stop offset="0.9863" stop-color="#fff" stop-opacity="0.000"/><stop offset="0.9945" stop-color="#fff" stop-opacity="0.200"/><stop offset="0.9945" stop-color="#fff" stop-opacity="0.000"/><stop offset="0.9973" stop-color="#fff" stop-opacity="0.000"/><stop offset="1.0000" stop-color="#fff" stop-opacity="0.200"/></radialGradient>
<path id="c1" d="M300.0,432.5A384,384,0,0,1,302.1,392.4A384,384,0,0,0,300.0,352.2A384,384,0,0,0,297.9,392.4A384,384,0,0,1,300.0,432.5ZM300.0,432.5A384,384,0,0,0,306.3,392.8A384,384,0,0,0,308.4,352.7A384,384,0,0,0,302.1,392.4A384,384,0,0,0,300.0,432.5ZM300.0,432.5A384,384,0,0,0,310.4,393.7A384,384,0,0,0,316.7,354.0A384,384,0,0,0,306.3,392.8A384,384,0,0,1,300.0,432.5ZM300.0,432.5A384,384,0,0,1,314.4,395.0A384,384,0,0,0,324.8,356.2A384,384,0,0,0,310.4,393.7A384,384,0,0,1,300.0,432.5ZM300.0,432.5A384,384,0,0,1,318.2,396.7A384,384,0,0,0,332.7,359.2A384,384,0,0,0,314.4,395.0A384,384,0,0,0,300.0,432.5ZM300.0,432.5A384,384,0,0,1,321.9,398.8A384,384,0,0,0,340.1,363.0A384,384,0,0,0,318.2,396.7A384,384,0,0,0,300.0,432.5ZM300.0,432.5A384,384,0,0,1,325.3,401.3A384,384,0,0,0,347.2,367.6A384,384,0,0,0,321.9,398.8A384,384,0,0,0,300.0,432.5ZM300.0,432.5A384,384,0,0,0,328.4,404.1A384,384,0,0,0,353.7,372.8A384,384,0,0,0,325.3,401.3A384,384,0,0,0,300.0,432.5ZM300.0,432.5A384,384,0,0,0,331.2,407.2A384,384,0,0,0,359.7,378.8A384,384,0,0,0,328.4,404.1A384,384,0,0,1,300.0,432.5ZM300.0,432.5A384,384,0,0,0,271.6,404.1A384,384,0,0,0,240.3,378.8A384,384,0,0,0,268.8,407.2A384,384,0,0,0,300.0,432.5ZM300.0,432.5A384,384,0,0,0,274.7,401.3A384,384,0,0,0,246.3,372.8A384,384,0,0,0,271.6,404.1A384,384,0,0,1,300.0,432.5ZM300.0,432.5A384,384,0,0,0,278.1,398.8A384,384,0,0,0,252.8,367.6A384,384,0,0,0,274.7,401.3A384,384,0,0,1,300.0,432.5ZM300.0,432.5A384,384,0,0,0,281.8,396.7A384,384,0,0,0,259.9,363.0A384,384,0,0,0,278.1,398.8A384,384,0,0,1,300.0,432.5ZM300.0,432.5A384,384,0,0,1,285.6,395.0A384,384,0,0,0,267.3,359.2A384,384,0,0,0,281.8,396.7A384,384,0,0,1,300.0,432.5ZM300.0,432.5A384,384,0,0,0,289.6,393.7A384,384,0,0,0,275.2,356.2A384,384,0,0,0,285.6,395.0A384,384,0,0,0,300.0,432.5ZM300.0,432.5A384,384,0,0,0,293.7,392.8A384,384,0,0,0,283.3,354.0A384,384,0,0,0,289.6,393.7A384,384,0,0,1,300.0,432.5ZM300.0,432.5A384,384,0,0,1,297.9,392.4A384,384,0,0,0,291.6,352.7A384,384,0,0,0,293.7,392.8A384,384,0,0,1,300.0,432.5ZM300.0,352.2A384,384,0,0,1,306.3,312.5A384,384,0,0,0,300.0,272.8A384,384,0,0,0,293.7,312.5A384,384,0,0,1,300.0,352.2ZM308.4,352.7A384,384,0,0,1,318.8,313.8A384,384,0,0,0,316.7,273.7A384,384,0,0,0,306.3,312.5A384,384,0,0,1,308.4,352.7ZM316.7,354.0A384,384,0,0,1,331.1,316.5A384,384,0,0,0,333.2,276.3A384,384,0,0,0,318.8,313.8A384,384,0,0,1,316.7,354.0ZM324.8,356.2A384,384,0,0,1,343.1,320.3A384,384,0,0,0,349.3,280.6A384,384,0,0,0,331.1,316.5A384,384,0,0,1,324.8,356.2ZM332.7,359.2A384,384,0,0,1,354.5,325.5A384,384,0,0,0,364.9,286.6A384,384,0,0,0,343.1,320.3A384,384,0,0,1,332.7,359.2ZM340.1,363.0A384,384,0,0,1,365.4,331.7A384,384,0,0,0,379.8,294.2A384,384,0,0,0,354.5,325.5A384,384,0,0,1,340.1,363.0ZM347.2,367.6A384,384,0,0,1,375.6,339.1A384,384,0,0,0,393.9,303.3A384,384,0,0,0,365.4,331.7A384,384,0,0,1,347.2,367.6ZM353.7,372.8A384,384,0,0,1,385.0,347.5A384,384,0,0,0,406.8,313.8A384,384,0,0,0,375.6,339.1A384,384,0,0,1,353.7,372.8ZM359.7,378.8A384,384,0,0,1,393.4,356.9A384,384,0,0,0,418.7,325.7A384,384,0,0,0,385.0,347.5A384,384,0,0,1,359.7,378.8ZM364.9,385.3A384,384,0,0,1,400.8,367.1A384,384,0,0,0,429.2,338.6A384,384,0,0,0,393.4,356.9A384,384,0,0,1,364.9,385.3ZM369.5,392.4A384,384,0,0,1,407.0,378.0A384,384,0,0,0,438.3,352.7A384,384,0,0,0,400.8,367.1A384,384,0,0,1,369.5,392.4ZM373.3,399.8A384,384,0,0,1,412.2,389.4A384,384,0,0,0,445.9,367.6A384,384,0,0,0,407.0,378.0A384,384,0,0,1,373.3,399.8ZM226.7,399.8A384,384,0,0,1,193.0,378.0A384,384,0,0,0,154.1,367.6A384,384,0,0,0,187.8,389.4A384,384,0,0,1,226.7,399.8ZM230.5,392.4A384,384,0,0,1,199.2,367.1A384,384,0,0,0,161.7,352.7A384,384,0,0,0,193.0,378.0A384,384,0,0,1,230.5,392.4ZM235.1,385.3A384,384,0,0,1,206.6,356.9A384,384,0,0,0,170.8,338.6A384,384,0,0,0,199.2,367.1A384,384,0,0,1,235.1,385.3ZM240.3,378.8A384,384,0,0,1,215.0,347.5A384,384,0,0,0,181.3,325.7A384,384,0,0,0,206.6,356.9A384,384,0,0,1,240.3,378.8ZM246.3,372.8A384,384,0,0,1,224.4,339.1A384,384,0,0,0,193.2,313.8A384,384,0,0,0,215.0,347.5A384,384,0,0,1,246.3,372.8ZM252.8,367.6A384,384,0,0,1,234.6,331.7A384,384,0,0,0,206.1,303.3A384,384,0,0,0,224.4,339.1A384,384,0,0,1,252.8,367.6ZM259.9,363.0A384,384,0,0,1,245.5,325.5A384,384,0,0,0,220.2,294.2A384,384,0,0,0,234.6,331.7A384,384,0,0,1,259.9,363.0ZM267.3,359.2A384,384,0,0,1,256.9,320.3A384,384,0,0,0,235.1,286.6A384,384,0,0,0,245.5,325.5A384,384,0,0,1,267.3,359.2ZM275.2,356.2A384,384,0,0,1,268.9,316.5A384,384,0,0,0,250.7,280.6A384,384,0,0,0,256.9,320.3A384,384,0,0,1,275.2,356.2ZM283.3,354.0A384,384,0,0,1,281.2,313.8A384,384,0,0,0,266.8,276.3A384,384,0,0,0,268.9,316.5A384,384,0,0,1,283.3,354.0ZM291.6,352.7A384,384,0,0,1,293.7,312.5A384,384,0,0,0,283.3,273.7A384,384,0,0,0,281.2,313.8A384,384,0,0,1,291.6,352.7ZM300.0,272.8A384,384,0,0,1,310.4,234.0A384,384,0,0,0,300.0,195.2A384,384,0,0,0,289.6,234.0A384,384,0,0,1,300.0,272.8ZM316.7,273.7A384,384,0,0,1,331.1,236.2A384,384,0,0,0,324.8,196.5A384,384,0,0,0,310.4,234.0A384,384,0,0,1,316.7,273.7ZM333.2,276.3A384,384,0,0,1,351.4,240.5A384,384,0,0,0,349.3,200.4A384,384,0,0,0,331.1,236.2A384,384,0,0,1,333.2,276.3ZM349.3,280.6A384,384,0,0,1,371.2,246.9A384,384,0,0,0,373.3,206.8A384,384,0,0,0,351.4,240.5A384,384,0,0,1,349.3,280.6ZM364.9,286.6A384,384,0,0,1,390.2,255.4A384,384,0,0,0,396.5,215.7A384,384,0,0,0,371.2,246.9A384,384,0,0,1,364.9,286.6ZM379.8,294.2A384,384,0,0,1,408.3,265.8A384,384,0,0,0,418.7,227.0A384,384,0,0,0,390.2,255.4A384,384,0,0,1,379.8,294.2ZM393.9,303.3A384,384,0,0,1,425.1,278.0A384,384,0,0,0,439.5,240.5A384,384,0,0,0,408.3,265.8A384,384,0,0,1,393.9,303.3ZM406.8,313.8A384,384,0,0,1,440.6,291.9A384,384,0,0,0,458.8,256.1A384,384,0,0,0,425.1,278.0A384,384,0,0,1,406.8,313.8ZM418.7,325.7A384,384,0,0,1,454.5,307.4A384,384,0,0,0,476.4,273.7A384,384,0,0,0,440.6,291.9A384,384,0,0,1,418.7,325.7ZM429.2,338.6A384,384,0,0,1,466.7,324.2A384,384,0,0,0,492.0,293.0A384,384,0,0,0,454.5,307.4A384,384,0,0,1,429.2,338.6ZM438.3,352.7A384,384,0,0,1,477.1,342.3A384,384,0,0,0,505.5,313.8A384,384,0,0,0,466.7,324.2A384,384,0,0,1,438.3,352.7ZM445.9,367.6A384,384,0,0,1,485.6,361.3A384,384,0,0,0,516.8,336.0A384,384,0,0,0,477.1,342.3A384,384,0,0,1,445.9,367.6ZM451.9,383.2A384,384,0,0,1,492.0,381.1A384,384,0,0,0,525.7,359.2A384,384,0,0,0,485.6,361.3A384,384,0,0,1,451.9,383.2ZM456.2,399.3A384,384,0,0,1,496.3,401.4A384,384,0,0,0,532.1,383.2A384,384,0,0,0,492.0,381.1A384,384,0,0,1,456.2,399.3ZM143.8,399.3A384,384,0,0,1,108.0,381.1A384,384,0,0,0,67.9,383.2A384,384,0,0,0,103.7,401.4A384,384,0,0,1,143.8,399.3ZM148.1,383.2A384,384,0,0,1,114.4,361.3A384,384,0,0,0,74.3,359.2A384,384,0,0,0,108.0,381.1A384,384,0,0,1,148.1,383.2ZM154.1,367.6A384,384,0,0,1,122.9,342.3A384,384,0,0,0,83.2,336.0A384,384,0,0,0,114.4,361.3A384,384,0,0,1,154.1,367.6ZM161.7,352.7A384,384,0,0,1,133.3,324.2A384,384,0,0,0,94.5,313.8A384,384,0,0,0,122.9,342.3A384,384,0,0,1,161.7,352.7ZM170.8,338.6A384,384,0,0,1,145.5,307.4A384,384,0,0,0,108.0,293.0A384,384,0,0,0,133.3,324.2A384,384,0,0,1,170.8,338.6ZM181.3,325.7A384,384,0,0,1,159.4,291.9A384,384,0,0,0,123.6,273.7A384,384,0,0,0,145.5,307.4A384,384,0,0,1,181.3,325.7ZM193.2,313.8A384,384,0,0,1,174.9,278.0A384,384,0,0,0,141.2,256.1A384,384,0,0,0,159.4,291.9A384,384,0,0,1,193.2,313.8ZM206.1,303.3A384,384,0,0,1,191.7,265.8A384,384,0,0,0,160.5,240.5A384,384,0,0,0,174.9,278.0A384,384,0,0,1,206.1,303.3ZM220.2,294.2A384,384,0,0,1,209.8,255.4A384,384,0,0,0,181.3,227.0A384,384,0,0,0,191.7,265.8A384,384,0,0,1,220.2,294.2ZM235.1,286.6A384,384,0,0,1,228.8,246.9A384,384,0,0,0,203.5,215.7A384,384,0,0,0,209.8,255.4A384,384,0,0,1,235.1,286.6ZM250.7,280.6A384,384,0,0,1,248.6,240.5A384,384,0,0,0,226.7,206.8A384,384,0,0,0,228.8,246.9A384,384,0,0,1,250.7,280.6ZM266.8,276.3A384,384,0,0,1,268.9,236.2A384,384,0,0,0,250.7,200.4A384,384,0,0,0,248.6,240.5A384,384,0,0,1,266.8,276.3ZM283.3,273.7A384,384,0,0,1,289.6,234.0A384,384,0,0,0,275.2,196.5A384,384,0,0,0,268.9,236.2A384,384,0,0,1,283.3,273.7ZM300.0,195.2A384,384,0,0,1,314.4,157.7A384,384,0,0,0,300.0,120.1A384,384,0,0,0,285.6,157.7A384,384,0,0,1,300.0,195.2ZM324.8,196.5A384,384,0,0,1,343.1,160.7A384,384,0,0,0,332.7,121.8A384,384,0,0,0,314.4,157.7A384,384,0,0,1,324.8,196.5ZM349.3,200.4A384,384,0,0,1,371.2,166.7A384,384,0,0,0,364.9,127.0A384,384,0,0,0,343.1,160.7A384,384,0,0,1,349.3,200.4ZM373.3,206.8A384,384,0,0,1,398.6,175.6A384,384,0,0,0,396.5,135.4A384,384,0,0,0,371.2,166.7A384,384,0,0,1,373.3,206.8ZM396.5,215.7A384,384,0,0,1,425.0,187.3A384,384,0,0,0,427.1,147.1A384,384,0,0,0,398.6,175.6A384,384,0,0,1,396.5,215.7ZM418.7,227.0A384,384,0,0,1,449.9,201.7A384,384,0,0,0,456.2,162.0A384,384,0,0,0,425.0,187.3A384,384,0,0,1,418.7,227.0ZM439.5,240.5A384,384,0,0,1,473.2,218.6A384,384,0,0,0,483.6,179.8A384,384,0,0,0,449.9,201.7A384,384,0,0,1,439.5,240.5ZM458.8,256.1A384,384,0,0,1,494.6,237.9A384,384,0,0,0,509.0,200.4A384,384,0,0,0,473.2,218.6A384,384,0,0,1,458.8,256.1ZM476.4,273.7A384,384,0,0,1,513.9,259.3A384,384,0,0,0,532.1,223.5A384,384,0,0,0,494.6,237.9A384,384,0,0,1,476.4,273.7ZM492.0,293.0A384,384,0,0,1,530.8,282.6A384,384,0,0,0,552.7,248.9A384,384,0,0,0,513.9,259.3A384,384,0,0,1,492.0,293.0ZM505.5,313.8A384,384,0,0,1,545.2,307.5A384,384,0,0,0,570.5,276.3A384,384,0,0,0,530.8,282.6A384,384,0,0,1,505.5,313.8ZM516.8,336.0A384,384,0,0,1,556.9,333.9A384,384,0,0,0,585.4,305.4A384,384,0,0,0,545.2,307.5A384,384,0,0,1,516.8,336.0ZM525.7,359.2A384,384,0,0,1,565.8,361.3A384,384,0,0,0,597.1,336.0A384,384,0,0,0,556.9,333.9A384,384,0,0,1,525.7,359.2ZM532.1,383.2A384,384,0,0,1,571.8,389.4A384,384,0,0,0,605.5,367.6A384,384,0,0,0,565.8,361.3A384,384,0,0,1,532.1,383.2ZM67.9,383.2A384,384,0,0,1,34.2,361.3A384,384,0,0,0,-5.5,367.6A384,384,0,0,0,28.2,389.4A384,384,0,0,1,67.9,383.2ZM74.3,359.2A384,384,0,0,1,43.1,333.9A384,384,0,0,0,2.9,336.0A384,384,0,0,0,34.2,361.3A384,384,0,0,1,74.3,359.2ZM83.2,336.0A384,384,0,0,1,54.8,307.5A384,384,0,0,0,14.6,305.4A384,384,0,0,0,43.1,333.9A384,384,0,0,1,83.2,336.0ZM94.5,313.8A384,384,0,0,1,69.2,282.6A384,384,0,0,0,29.5,276.3A384,384,0,0,0,54.8,307.5A384,384,0,0,1,94.5,313.8ZM108.0,293.0A384,384,0,0,1,86.1,259.3A384,384,0,0,0,47.3,248.9A384,384,0,0,0,69.2,282.6A384,384,0,0,1,108.0,293.0ZM123.6,273.7A384,384,0,0,1,105.4,237.9A384,384,0,0,0,67.9,223.5A384,384,0,0,0,86.1,259.3A384,384,0,0,1,123.6,273.7ZM141.2,256.1A384,384,0,0,1,126.8,218.6A384,384,0,0,0,91.0,200.4A384,384,0,0,0,105.4,237.9A384,384,0,0,1,141.2,256.1ZM160.5,240.5A384,384,0,0,1,150.1,201.7A384,384,0,0,0,116.4,179.8A384,384,0,0,0,126.8,218.6A384,384,0,0,1,160.5,240.5ZM181.3,227.0A384,384,0,0,1,175.0,187.3A384,384,0,0,0,143.8,162.0A384,384,0,0,0,150.1,201.7A384,384,0,0,1,181.3,227.0ZM203.5,215.7A384,384,0,0,1,201.4,175.6A384,384,0,0,0,172.9,147.1A384,384,0,0,0,175.0,187.3A384,384,0,0,1,203.5,215.7ZM226.7,206.8A384,384,0,0,1,228.8,166.7A384,384,0,0,0,203.5,135.4A384,384,0,0,0,201.4,175.6A384,384,0,0,1,226.7,206.8ZM250.7,200.4A384,384,0,0,1,256.9,160.7A384,384,0,0,0,235.1,127.0A384,384,0,0,0,228.8,166.7A384,384,0,0,1,250.7,200.4ZM275.2,196.5A384,384,0,0,1,285.6,157.7A384,384,0,0,0,267.3,121.8A384,384,0,0,0,256.9,160.7A384,384,0,0,1,275.2,196.5ZM300.0,120.1A384,384,0,0,1,318.2,84.3A384,384,0,0,0,300.0,48.5A384,384,0,0,0,281.8,84.3A384,384,0,0,1,300.0,120.1ZM332.7,121.8A384,384,0,0,1,354.5,88.1A384,384,0,0,0,340.1,50.6A384,384,0,0,0,318.2,84.3A384,384,0,0,1,332.7,121.8ZM364.9,127.0A384,384,0,0,1,390.2,95.7A384,384,0,0,0,379.8,56.9A384,384,0,0,0,354.5,88.1A384,384,0,0,1,364.9,127.0ZM396.5,135.4A384,384,0,0,1,425.0,107.0A384,384,0,0,0,418.7,67.3A384,384,0,0,0,390.2,95.7A384,384,0,0,1,396.5,135.4ZM427.1,147.1A384,384,0,0,1,458.3,121.8A384,384,0,0,0,456.2,81.7A384,384,0,0,0,425.0,107.0A384,384,0,0,1,427.1,147.1ZM456.2,162.0A384,384,0,0,1,489.9,140.1A384,384,0,0,0,492.0,99.9A384,384,0,0,0,458.3,121.8A384,384,0,0,1,456.2,162.0ZM483.6,179.8A384,384,0,0,1,519.4,161.5A384,384,0,0,0,525.7,121.8A384,384,0,0,0,489.9,140.1A384,384,0,0,1,483.6,179.8ZM509.0,200.4A384,384,0,0,1,546.5,186.0A384,384,0,0,0,556.9,147.1A384,384,0,0,0,519.4,161.5A384,384,0,0,1,509.0,200.4ZM532.1,223.5A384,384,0,0,1,571.0,213.1A384,384,0,0,0,585.4,175.6A384,384,0,0,0,546.5,186.0A384,384,0,0,1,532.1,223.5ZM552.7,248.9A384,384,0,0,1,592.4,242.6A384,384,0,0,0,610.7,206.8A384,384,0,0,0,571.0,213.1A384,384,0,0,1,552.7,248.9ZM570.5,276.3A384,384,0,0,1,610.7,274.2A384,384,0,0,0,632.6,240.5A384,384,0,0,0,592.4,242.6A384,384,0,0,1,570.5,276.3ZM585.4,305.4A384,384,0,0,1,625.5,307.5A384,384,0,0,0,650.8,276.3A384,384,0,0,0,610.7,274.2A384,384,0,0,1,585.4,305.4ZM597.1,336.0A384,384,0,0,1,636.8,342.3A384,384,0,0,0,665.2,313.8A384,384,0,0,0,625.5,307.5A384,384,0,0,1,597.1,336.0ZM2.9,336.0A384,384,0,0,1,-25.5,307.5A384,384,0,0,0,-65.2,313.8A384,384,0,0,0,-36.8,342.3A384,384,0,0,1,2.9,336.0ZM14.6,305.4A384,384,0,0,1,-10.7,274.2A384,384,0,0,0,-50.8,276.3A384,384,0,0,0,-25.5,307.5A384,384,0,0,1,14.6,305.4ZM29.5,276.3A384,384,0,0,1,7.6,242.6A384,384,0,0,0,-32.6,240.5A384,384,0,0,0,-10.7,274.2A384,384,0,0,1,29.5,276.3ZM47.3,248.9A384,384,0,0,1,29.0,213.1A384,384,0,0,0,-10.7,206.8A384,384,0,0,0,7.6,242.6A384,384,0,0,1,47.3,248.9ZM67.9,223.5A384,384,0,0,1,53.5,186.0A384,384,0,0,0,14.6,175.6A384,384,0,0,0,29.0,213.1A384,384,0,0,1,67.9,223.5ZM91.0,200.4A384,384,0,0,1,80.6,161.5A384,384,0,0,0,43.1,147.1A384,384,0,0,0,53.5,186.0A384,384,0,0,1,91.0,200.4ZM116.4,179.8A384,384,0,0,1,110.1,140.1A384,384,0,0,0,74.3,121.8A384,384,0,0,0,80.6,161.5A384,384,0,0,1,116.4,179.8ZM143.8,162.0A384,384,0,0,1,141.7,121.8A384,384,0,0,0,108.0,99.9A384,384,0,0,0,110.1,140.1A384,384,0,0,1,143.8,162.0ZM172.9,147.1A384,384,0,0,1,175.0,107.0A384,384,0,0,0,143.8,81.7A384,384,0,0,0,141.7,121.8A384,384,0,0,1,172.9,147.1ZM203.5,135.4A384,384,0,0,1,209.8,95.7A384,384,0,0,0,181.3,67.3A384,384,0,0,0,175.0,107.0A384,384,0,0,1,203.5,135.4ZM235.1,127.0A384,384,0,0,1,245.5,88.1A384,384,0,0,0,220.2,56.9A384,384,0,0,0,209.8,95.7A384,384,0,0,1,235.1,127.0ZM267.3,121.8A384,384,0,0,1,281.8,84.3A384,384,0,0,0,259.9,50.6A384,384,0,0,0,245.5,88.1A384,384,0,0,1,267.3,121.8ZM300.0,48.5A384,384,0,0,1,321.9,14.8A384,384,0,0,0,300.0,-18.9A384,384,0,0,0,278.1,14.8A384,384,0,0,1,300.0,48.5ZM340.1,50.6A384,384,0,0,1,365.4,19.4A384,384,0,0,0,347.2,-16.4A384,384,0,0,0,321.9,14.8A384,384,0,0,1,340.1,50.6ZM379.8,56.9A384,384,0,0,1,408.3,28.5A384,384,0,0,0,393.9,-9.1A384,384,0,0,0,365.4,19.4A384,384,0,0,1,379.8,56.9ZM418.7,67.3A384,384,0,0,1,449.9,42.0A384,384,0,0,0,439.5,3.2A384,384,0,0,0,408.3,28.5A384,384,0,0,1,418.7,67.3ZM456.2,81.7A384,384,0,0,1,489.9,59.8A384,384,0,0,0,483.6,20.1A384,384,0,0,0,449.9,42.0A384,384,0,0,1,456.2,81.7ZM492.0,99.9A384,384,0,0,1,527.8,81.7A384,384,0,0,0,525.7,41.6A384,384,0,0,0,489.9,59.8A384,384,0,0,1,492.0,99.9ZM525.7,121.8A384,384,0,0,1,563.2,107.4A384,384,0,0,0,565.3,67.3A384,384,0,0,0,527.8,81.7A384,384,0,0,1,525.7,121.8ZM556.9,147.1A384,384,0,0,1,595.8,136.7A384,384,0,0,0,602.1,97.0A384,384,0,0,0,563.2,107.4A384,384,0,0,1,556.9,147.1ZM585.4,175.6A384,384,0,0,1,625.1,169.3A384,384,0,0,0,635.5,130.4A384,384,0,0,0,595.8,136.7A384,384,0,0,1,585.4,175.6ZM14.6,175.6A384,384,0,0,1,4.2,136.7A384,384,0,0,0,-35.5,130.4A384,384,0,0,0,-25.1,169.3A384,384,0,0,1,14.6,175.6ZM43.1,147.1A384,384,0,0,1,36.8,107.4A384,384,0,0,0,-2.1,97.0A384,384,0,0,0,4.2,136.7A384,384,0,0,1,43.1,147.1ZM74.3,121.8A384,384,0,0,1,72.2,81.7A384,384,0,0,0,34.7,67.3A384,384,0,0,0,36.8,107.4A384,384,0,0,1,74.3,121.8ZM108.0,99.9A384,384,0,0,1,110.1,59.8A384,384,0,0,0,74.3,41.6A384,384,0,0,0,72.2,81.7A384,384,0,0,1,108.0,99.9ZM143.8,81.7A384,384,0,0,1,150.1,42.0A384,384,0,0,0,116.4,20.1A384,384,0,0,0,110.1,59.8A384,384,0,0,1,143.8,81.7ZM181.3,67.3A384,384,0,0,1,191.7,28.5A384,384,0,0,0,160.5,3.2A384,384,0,0,0,150.1,42.0A384,384,0,0,1,181.3,67.3ZM220.2,56.9A384,384,0,0,1,234.6,19.4A384,384,0,0,0,206.1,-9.1A384,384,0,0,0,191.7,28.5A384,384,0,0,1,220.2,56.9ZM259.9,50.6A384,384,0,0,1,278.1,14.8A384,384,0,0,0,252.8,-16.4A384,384,0,0,0,234.6,19.4A384,384,0,0,1,259.9,50.6ZM439.5,3.2A384,384,0,0,1,473.2,-18.7A384,384,0,0,0,458.8,-56.2A384,384,0,0,0,425.1,-34.3A384,384,0,0,1,439.5,3.2ZM483.6,20.1A384,384,0,0,1,519.4,1.9A384,384,0,0,0,509.0,-37.0A384,384,0,0,0,473.2,-18.7A384,384,0,0,1,483.6,20.1ZM525.7,41.6A384,384,0,0,1,563.2,27.2A384,384,0,0,0,556.9,-12.5A384,384,0,0,0,519.4,1.9A384,384,0,0,1,525.7,41.6ZM565.3,67.3A384,384,0,0,1,604.2,56.9A384,384,0,0,0,602.1,16.8A384,384,0,0,0,563.2,27.2A384,384,0,0,1,565.3,67.3ZM34.7,67.3A384,384,0,0,1,36.8,27.2A384,384,0,0,0,-2.1,16.8A384,384,0,0,0,-4.2,56.9A384,384,0,0,1,34.7,67.3ZM74.3,41.6A384,384,0,0,1,80.6,1.9A384,384,0,0,0,43.1,-12.5A384,384,0,0,0,36.8,27.2A384,384,0,0,1,74.3,41.6ZM116.4,20.1A384,384,0,0,1,126.8,-18.7A384,384,0,0,0,91.0,-37.0A384,384,0,0,0,80.6,1.9A384,384,0,0,1,116.4,20.1ZM160.5,3.2A384,384,0,0,1,174.9,-34.3A384,384,0,0,0,141.2,-56.2A384,384,0,0,0,126.8,-18.7A384,384,0,0,1,160.5,3.2ZM602.1,16.8A384,384,0,0,1,641.8,10.5A384,384,0,0,0,635.5,-29.2A384,384,0,0,0,595.8,-22.9A384,384,0,0,1,602.1,16.8ZM-2.1,16.8A384,384,0,0,1,4.2,-22.9A384,384,0,0,0,-35.5,-29.2A384,384,0,0,0,-41.8,10.5A384,384,0,0,1,-2.1,16.8Z"/>
</defs>
<rect width="600" height="400" fill="#8020a0"/>
<g filter="url(#bl)">
<rect x="-72.5" y="-72.5" width="85.5" height="85.5" fill="#5d051e"/>
<rect x="12.5" y="-72.5" width="25.5" height="85.5" fill="#5c041e"/>
<rect x="37.5" y="-72.5" width="25.5" height="85.5" fill="#5c041f"/>
<rect x="62.5" y="-72.5" width="25.5" height="85.5" fill="#5d0526"/>
<rect x="87.5" y="-72.5" width="25.5" height="85.5" fill="#5e062e"/>
<rect x="112.5" y="-72.5" width="25.5" height="85.5" fill="#670736"/>
<rect x="137.5" y="-72.5" width="25.5" height="85.5" fill="#70083e"/>
<rect x="162.5" y="-72.5" width="25.5" height="85.5" fill="#70094a"/>
<rect x="187.5" y="-72.5" width="25.5" height="85.5" fill="#6f0a57"/>
<rect x="212.5" y="-72.5" width="25.5" height="85.5" fill="#740b66"/>
<rect x="237.5" y="-72.5" width="25.5" height="85.5" fill="#790c74"/>
<rect x="262.5" y="-72.5" width="25.5" height="85.5" fill="#7a0e7f"/>
<rect x="287.5" y="-72.5" width="25.5" height="85.5" fill="#7c0f8a"/>
<rect x="312.5" y="-72.5" width="25.5" height="85.5" fill="#700e84"/>
<rect x="337.5" y="-72.5" width="25.5" height="85.5" fill="#640c7e"/>
<rect x="362.5" y="-72.5" width="25.5" height="85.5" fill="#580c7a"/>
<rect x="387.5" y="-72.5" width="25.5" height="85.5" fill="#4d0c75"/>
<rect x="412.5" y="-72.5" width="25.5" height="85.5" fill="#450c74"/>
<rect x="437.5" y="-72.5" width="25.5" height="85.5" fill="#3d0b72"/>
<rect x="462.5" y="-72.5" width="25.5" height="85.5" fill="#340a6c"/>
<rect x="487.5" y="-72.5" width="25.5" height="85.5" fill="#2a0866"/>
<rect x="512.5" y="-72.5" width="25.5" height="85.5" fill="#260964"/>
<rect x="537.5" y="-72.5" width="25.5" height="85.5" fill="#210a63"/>
<rect x="562.5" y="-72.5" width="25.5" height="85.5" fill="#1e0a5f"/>
<rect x="587.5" y="-72.5" width="85.5" height="85.5" fill="#1b095b"/>
<rect x="-72.5" y="12.5" width="85.5" height="25.5" fill="#68061e"/>
<rect x="12.5" y="12.5" width="25.5" height="25.5" fill="#680621"/>
<rect x="37.5" y="12.5" width="25.5" height="25.5" fill="#6a0624"/>
<rect x="62.5" y="12.5" width="25.5" height="25.5" fill="#6b062b"/>
<rect x="87.5" y="12.5" width="25.5" height="25.5" fill="#6c0632"/>
<rect x="112.5" y="12.5" width="25.5" height="25.5" fill="#74073c"/>
<rect x="137.5" y="12.5" width="25.5" height="25.5" fill="#7c0846"/>
<rect x="162.5" y="12.5" width="25.5" height="25.5" fill="#7c0851"/>
<rect x="187.5" y="12.5" width="25.5" height="25.5" fill="#7c0a5c"/>
<rect x="212.5" y="12.5" width="25.5" height="25.5" fill="#7f0b6b"/>
<rect x="237.5" y="12.5" width="25.5" height="25.5" fill="#820c7a"/>
<rect x="262.5" y="12.5" width="25.5" height="25.5" fill="#820e84"/>
<rect x="287.5" y="12.5" width="25.5" height="25.5" fill="#820f8d"/>
<rect x="312.5" y="12.5" width="25.5" height="25.5" fill="#770d8a"/>
<rect x="337.5" y="12.5" width="25.5" height="25.5" fill="#6c0a87"/>
<rect x="362.5" y="12.5" width="25.5" height="25.5" fill="#600b85"/>
<rect x="387.5" y="12.5" width="25.5" height="25.5" fill="#540c84"/>
<rect x="412.5" y="12.5" width="25.5" height="25.5" fill="#4a0b80"/>
<rect x="437.5" y="12.5" width="25.5" height="25.5" fill="#3e0a7e"/>
<rect x="462.5" y="12.5" width="25.5" height="25.5" fill="#340a77"/>
<rect x="487.5" y="12.5" width="25.5" height="25.5" fill="#2a0871"/>
<rect x="512.5" y="12.5" width="25.5" height="25.5" fill="#24096d"/>
<rect x="537.5" y="12.5" width="25.5" height="25.5" fill="#1e0a68"/>
<rect x="562.5" y="12.5" width="25.5" height="25.5" fill="#1c0964"/>
<rect x="587.5" y="12.5" width="85.5" height="25.5" fill="#190960"/>
<rect x="-72.5" y="37.5" width="85.5" height="25.5" fill="#72061f"/>
<rect x="12.5" y="37.5" width="25.5" height="25.5" fill="#740624"/>
<rect x="37.5" y="37.5" width="25.5" height="25.5" fill="#770728"/>
<rect x="62.5" y="37.5" width="25.5" height="25.5" fill="#790730"/>
<rect x="87.5" y="37.5" width="25.5" height="25.5" fill="#7b0737"/>
<rect x="112.5" y="37.5" width="25.5" height="25.5" fill="#820743"/>
<rect x="137.5" y="37.5" width="25.5" height="25.5" fill="#88074f"/>
<rect x="162.5" y="37.5" width="25.5" height="25.5" fill="#890858"/>
<rect x="187.5" y="37.5" width="25.5" height="25.5" fill="#8a0960"/>
<rect x="212.5" y="37.5" width="25.5" height="25.5" fill="#8a0a70"/>
<rect x="237.5" y="37.5" width="25.5" height="25.5" fill="#8b0c80"/>
<rect x="262.5" y="37.5" width="25.5" height="25.5" fill="#8a0e88"/>
<rect x="287.5" y="37.5" width="25.5" height="25.5" fill="#880f90"/>
<rect x="312.5" y="37.5" width="25.5" height="25.5" fill="#7e0c90"/>
<rect x="337.5" y="37.5" width="25.5" height="25.5" fill="#740990"/>
<rect x="362.5" y="37.5" width="25.5" height="25.5" fill="#680a91"/>
<rect x="387.5" y="37.5" width="25.5" height="25.5" fill="#5c0b92"/>
<rect x="412.5" y="37.5" width="25.5" height="25.5" fill="#4e0a8e"/>
<rect x="437.5" y="37.5" width="25.5" height="25.5" fill="#400a89"/>
<rect x="462.5" y="37.5" width="25.5" height="25.5" fill="#350a82"/>
<rect x="487.5" y="37.5" width="25.5" height="25.5" fill="#2a097c"/>
<rect x="512.5" y="37.5" width="25.5" height="25.5" fill="#230975"/>
<rect x="537.5" y="37.5" width="25.5" height="25.5" fill="#1c096e"/>
<rect x="562.5" y="37.5" width="25.5" height="25.5" fill="#190969"/>
<rect x="587.5" y="37.5" width="85.5" height="25.5" fill="#160964"/>
<rect x="-72.5" y="62.5" width="85.5" height="25.5" fill="#880824"/>
<rect x="12.5" y="62.5" width="25.5" height="25.5" fill="#8b0829"/>
<rect x="37.5" y="62.5" width="25.5" height="25.5" fill="#8e082e"/>
<rect x="62.5" y="62.5" width="25.5" height="25.5" fill="#910836"/>
<rect x="87.5" y="62.5" width="25.5" height="25.5" fill="#94083f"/>
<rect x="112.5" y="62.5" width="25.5" height="25.5" fill="#9d084e"/>
<rect x="137.5" y="62.5" width="25.5" height="25.5" fill="#a6085c"/>
<rect x="162.5" y="62.5" width="25.5" height="25.5" fill="#a30a63"/>
<rect x="187.5" y="62.5" width="25.5" height="25.5" fill="#a00a6a"/>
<rect x="212.5" y="62.5" width="25.5" height="25.5" fill="#a10c7f"/>
<rect x="237.5" y="62.5" width="25.5" height="25.5" fill="#a20e93"/>
<rect x="262.5" y="62.5" width="25.5" height="25.5" fill="#9b0f9b"/>
<rect x="287.5" y="62.5" width="25.5" height="25.5" fill="#9410a3"/>
<rect x="312.5" y="62.5" width="25.5" height="25.5" fill="#8b0da2"/>
<rect x="337.5" y="62.5" width="25.5" height="25.5" fill="#820aa1"/>
<rect x="362.5" y="62.5" width="25.5" height="25.5" fill="#710aa2"/>
<rect x="387.5" y="62.5" width="25.5" height="25.5" fill="#600ba3"/>
<rect x="412.5" y="62.5" width="25.5" height="25.5" fill="#4f0a9c"/>
<rect x="437.5" y="62.5" width="25.5" height="25.5" fill="#3e0a96"/>
<rect x="462.5" y="62.5" width="25.5" height="25.5" fill="#34098e"/>
<rect x="487.5" y="62.5" width="25.5" height="25.5" fill="#280887"/>
<rect x="512.5" y="62.5" width="25.5" height="25.5" fill="#20097e"/>
<rect x="537.5" y="62.5" width="25.5" height="25.5" fill="#180976"/>
<rect x="562.5" y="62.5" width="25.5" height="25.5" fill="#150972"/>
<rect x="587.5" y="62.5" width="85.5" height="25.5" fill="#13096d"/>
<rect x="-72.5" y="87.5" width="85.5" height="25.5" fill="#9f0a2a"/>
<rect x="12.5" y="87.5" width="25.5" height="25.5" fill="#a20a2e"/>
<rect x="37.5" y="87.5" width="25.5" height="25.5" fill="#a40a33"/>
<rect x="62.5" y="87.5" width="25.5" height="25.5" fill="#a80a3d"/>
<rect x="87.5" y="87.5" width="25.5" height="25.5" fill="#ad0a47"/>
<rect x="112.5" y="87.5" width="25.5" height="25.5" fill="#b80a58"/>
<rect x="137.5" y="87.5" width="25.5" height="25.5" fill="#c30a69"/>
<rect x="162.5" y="87.5" width="25.5" height="25.5" fill="#bc0b6f"/>
<rect x="187.5" y="87.5" width="25.5" height="25.5" fill="#b60c75"/>
<rect x="212.5" y="87.5" width="25.5" height="25.5" fill="#b70e8e"/>
<rect x="237.5" y="87.5" width="25.5" height="25.5" fill="#b810a6"/>
<rect x="262.5" y="87.5" width="25.5" height="25.5" fill="#ac11ae"/>
<rect x="287.5" y="87.5" width="25.5" height="25.5" fill="#a012b6"/>
<rect x="312.5" y="87.5" width="25.5" height="25.5" fill="#980eb4"/>
<rect x="337.5" y="87.5" width="25.5" height="25.5" fill="#900ab2"/>
<rect x="362.5" y="87.5" width="25.5" height="25.5" fill="#7a0ab3"/>
<rect x="387.5" y="87.5" width="25.5" height="25.5" fill="#640bb4"/>
<rect x="412.5" y="87.5" width="25.5" height="25.5" fill="#500aac"/>
<rect x="437.5" y="87.5" width="25.5" height="25.5" fill="#3d09a3"/>
<rect x="462.5" y="87.5" width="25.5" height="25.5" fill="#32089a"/>
<rect x="487.5" y="87.5" width="25.5" height="25.5" fill="#270892"/>
<rect x="512.5" y="87.5" width="25.5" height="25.5" fill="#1d0888"/>
<rect x="537.5" y="87.5" width="25.5" height="25.5" fill="#13097e"/>
<rect x="562.5" y="87.5" width="25.5" height="25.5" fill="#110a7a"/>
<rect x="587.5" y="87.5" width="85.5" height="25.5" fill="#0f0a76"/>
<rect x="-72.5" y="112.5" width="85.5" height="25.5" fill="#b20e30"/>
<rect x="12.5" y="112.5" width="25.5" height="25.5" fill="#b60d34"/>
<rect x="37.5" y="112.5" width="25.5" height="25.5" fill="#ba0c38"/>
<rect x="62.5" y="112.5" width="25.5" height="25.5" fill="#bf0c41"/>
<rect x="87.5" y="112.5" width="25.5" height="25.5" fill="#c50a4a"/>
<rect x="112.5" y="112.5" width="25.5" height="25.5" fill="#cc0a55"/>
<rect x="137.5" y="112.5" width="25.5" height="25.5" fill="#d20a60"/>
<rect x="162.5" y="112.5" width="25.5" height="25.5" fill="#cf0b6b"/>
<rect x="187.5" y="112.5" width="25.5" height="25.5" fill="#cc0d76"/>
<rect x="212.5" y="112.5" width="25.5" height="25.5" fill="#cc0f97"/>
<rect x="237.5" y="112.5" width="25.5" height="25.5" fill="#ce12b7"/>
<rect x="262.5" y="112.5" width="25.5" height="25.5" fill="#c114c0"/>
<rect x="287.5" y="112.5" width="25.5" height="25.5" fill="#b516c9"/>
<rect x="312.5" y="112.5" width="25.5" height="25.5" fill="#ac11ca"/>
<rect x="337.5" y="112.5" width="25.5" height="25.5" fill="#a20dcc"/>
<rect x="362.5" y="112.5" width="25.5" height="25.5" fill="#840cc8"/>
<rect x="387.5" y="112.5" width="25.5" height="25.5" fill="#650cc5"/>
<rect x="412.5" y="112.5" width="25.5" height="25.5" fill="#4e0abc"/>
<rect x="437.5" y="112.5" width="25.5" height="25.5" fill="#3808b2"/>
<rect x="462.5" y="112.5" width="25.5" height="25.5" fill="#2e09aa"/>
<rect x="487.5" y="112.5" width="25.5" height="25.5" fill="#260aa2"/>
<rect x="512.5" y="112.5" width="25.5" height="25.5" fill="#1c0a97"/>
<rect x="537.5" y="112.5" width="25.5" height="25.5" fill="#130a8c"/>
<rect x="562.5" y="112.5" width="25.5" height="25.5" fill="#100a86"/>
<rect x="587.5" y="112.5" width="85.5" height="25.5" fill="#0e0a80"/>
<rect x="-72.5" y="137.5" width="85.5" height="25.5" fill="#c61136"/>
<rect x="12.5" y="137.5" width="25.5" height="25.5" fill="#ca1039"/>
<rect x="37.5" y="137.5" width="25.5" height="25.5" fill="#cf0f3c"/>
<rect x="62.5" y="137.5" width="25.5" height="25.5" fill="#d60d44"/>
<rect x="87.5" y="137.5" width="25.5" height="25.5" fill="#dd0b4d"/>
<rect x="112.5" y="137.5" width="25.5" height="25.5" fill="#e00a52"/>
<rect x="137.5" y="137.5" width="25.5" height="25.5" fill="#e20957"/>
<rect x="162.5" y="137.5" width="25.5" height="25.5" fill="#e20c68"/>
<rect x="187.5" y="137.5" width="25.5" height="25.5" fill="#e10e78"/>
<rect x="212.5" y="137.5" width="25.5" height="25.5" fill="#e210a0"/>
<rect x="237.5" y="137.5" width="25.5" height="25.5" fill="#e313c8"/>
<rect x="262.5" y="137.5" width="25.5" height="25.5" fill="#d616d2"/>
<rect x="287.5" y="137.5" width="25.5" height="25.5" fill="#ca19dc"/>
<rect x="312.5" y="137.5" width="25.5" height="25.5" fill="#bf14e0"/>
<rect x="337.5" y="137.5" width="25.5" height="25.5" fill="#b410e5"/>
<rect x="362.5" y="137.5" width="25.5" height="25.5" fill="#8d0ede"/>
<rect x="387.5" y="137.5" width="25.5" height="25.5" fill="#660dd6"/>
<rect x="412.5" y="137.5" width="25.5" height="25.5" fill="#4c0acc"/>
<rect x="437.5" y="137.5" width="25.5" height="25.5" fill="#3208c2"/>
<rect x="462.5" y="137.5" width="25.5" height="25.5" fill="#2b0aba"/>
<rect x="487.5" y="137.5" width="25.5" height="25.5" fill="#240bb1"/>
<rect x="512.5" y="137.5" width="25.5" height="25.5" fill="#1c0ba6"/>
<rect x="537.5" y="137.5" width="25.5" height="25.5" fill="#130b9a"/>
<rect x="562.5" y="137.5" width="25.5" height="25.5" fill="#100a92"/>
<rect x="587.5" y="137.5" width="85.5" height="25.5" fill="#0c098a"/>
<rect x="-72.5" y="162.5" width="85.5" height="25.5" fill="#d6153a"/>
<rect x="12.5" y="162.5" width="25.5" height="25.5" fill="#da153d"/>
<rect x="37.5" y="162.5" width="25.5" height="25.5" fill="#de1540"/>
<rect x="62.5" y="162.5" width="25.5" height="25.5" fill="#e01341"/>
<rect x="87.5" y="162.5" width="25.5" height="25.5" fill="#e31042"/>
<rect x="112.5" y="162.5" width="25.5" height="25.5" fill="#e51046"/>
<rect x="137.5" y="162.5" width="25.5" height="25.5" fill="#e6104a"/>
<rect x="162.5" y="162.5" width="25.5" height="25.5" fill="#e71261"/>
<rect x="187.5" y="162.5" width="25.5" height="25.5" fill="#e81478"/>
<rect x="212.5" y="162.5" width="25.5" height="25.5" fill="#ea16a2"/>
<rect x="237.5" y="162.5" width="25.5" height="25.5" fill="#eb1aca"/>
<rect x="262.5" y="162.5" width="25.5" height="25.5" fill="#e51ed9"/>
<rect x="287.5" y="162.5" width="25.5" height="25.5" fill="#e022e8"/>
<rect x="312.5" y="162.5" width="25.5" height="25.5" fill="#cf1eea"/>
<rect x="337.5" y="162.5" width="25.5" height="25.5" fill="#be1aed"/>
<rect x="362.5" y="162.5" width="25.5" height="25.5" fill="#9318e8"/>
<rect x="387.5" y="162.5" width="25.5" height="25.5" fill="#6815e4"/>
<rect x="412.5" y="162.5" width="25.5" height="25.5" fill="#4c10db"/>
<rect x="437.5" y="162.5" width="25.5" height="25.5" fill="#300ad2"/>
<rect x="462.5" y="162.5" width="25.5" height="25.5" fill="#280bcb"/>
<rect x="487.5" y="162.5" width="25.5" height="25.5" fill="#220cc3"/>
<rect x="512.5" y="162.5" width="25.5" height="25.5" fill="#190cb8"/>
<rect x="537.5" y="162.5" width="25.5" height="25.5" fill="#100cac"/>
<rect x="562.5" y="162.5" width="25.5" height="25.5" fill="#0d0ba4"/>
<rect x="587.5" y="162.5" width="85.5" height="25.5" fill="#0a0a9b"/>
<rect x="-72.5" y="187.5" width="85.5" height="25.5" fill="#e5193e"/>
<rect x="12.5" y="187.5" width="25.5" height="25.5" fill="#e81a40"/>
<rect x="37.5" y="187.5" width="25.5" height="25.5" fill="#ec1b43"/>
<rect x="62.5" y="187.5" width="25.5" height="25.5" fill="#ea183d"/>
<rect x="87.5" y="187.5" width="25.5" height="25.5" fill="#e91637"/>
<rect x="112.5" y="187.5" width="25.5" height="25.5" fill="#ea163a"/>
<rect x="137.5" y="187.5" width="25.5" height="25.5" fill="#eb173d"/>
<rect x="162.5" y="187.5" width="25.5" height="25.5" fill="#ed185b"/>
<rect x="187.5" y="187.5" width="25.5" height="25.5" fill="#ef1979"/>
<rect x="212.5" y="187.5" width="25.5" height="25.5" fill="#f11ca3"/>
<rect x="237.5" y="187.5" width="25.5" height="25.5" fill="#f320cd"/>
<rect x="262.5" y="187.5" width="25.5" height="25.5" fill="#f425e0"/>
<rect x="287.5" y="187.5" width="25.5" height="25.5" fill="#f52af4"/>
<rect x="312.5" y="187.5" width="25.5" height="25.5" fill="#df28f4"/>
<rect x="337.5" y="187.5" width="25.5" height="25.5" fill="#c925f5"/>
<rect x="362.5" y="187.5" width="25.5" height="25.5" fill="#9a21f3"/>
<rect x="387.5" y="187.5" width="25.5" height="25.5" fill="#6a1df1"/>
<rect x="412.5" y="187.5" width="25.5" height="25.5" fill="#4c15ea"/>
<rect x="437.5" y="187.5" width="25.5" height="25.5" fill="#2d0de3"/>
<rect x="462.5" y="187.5" width="25.5" height="25.5" fill="#260cdc"/>
<rect x="487.5" y="187.5" width="25.5" height="25.5" fill="#1f0cd5"/>
<rect x="512.5" y="187.5" width="25.5" height="25.5" fill="#160dca"/>
<rect x="537.5" y="187.5" width="25.5" height="25.5" fill="#0d0ebf"/>
<rect x="562.5" y="187.5" width="25.5" height="25.5" fill="#0a0cb5"/>
<rect x="587.5" y="187.5" width="85.5" height="25.5" fill="#080bab"/>
<rect x="-72.5" y="212.5" width="85.5" height="25.5" fill="#ee2442"/>
<rect x="12.5" y="212.5" width="25.5" height="25.5" fill="#ec223d"/>
<rect x="37.5" y="212.5" width="25.5" height="25.5" fill="#eb2038"/>
<rect x="62.5" y="212.5" width="25.5" height="25.5" fill="#ea1c36"/>
<rect x="87.5" y="212.5" width="25.5" height="25.5" fill="#e91a33"/>
<rect x="112.5" y="212.5" width="25.5" height="25.5" fill="#eb1c38"/>
<rect x="137.5" y="212.5" width="25.5" height="25.5" fill="#ee203d"/>
<rect x="162.5" y="212.5" width="25.5" height="25.5" fill="#ef2158"/>
<rect x="187.5" y="212.5" width="25.5" height="25.5" fill="#f12374"/>
<rect x="212.5" y="212.5" width="25.5" height="25.5" fill="#f3269b"/>
<rect x="237.5" y="212.5" width="25.5" height="25.5" fill="#f528c2"/>
<rect x="262.5" y="212.5" width="25.5" height="25.5" fill="#f42cdb"/>
<rect x="287.5" y="212.5" width="25.5" height="25.5" fill="#f230f4"/>
<rect x="312.5" y="212.5" width="25.5" height="25.5" fill="#d42df4"/>
<rect x="337.5" y="212.5" width="25.5" height="25.5" fill="#b62bf6"/>
<rect x="362.5" y="212.5" width="25.5" height="25.5" fill="#8e29f4"/>
<rect x="387.5" y="212.5" width="25.5" height="25.5" fill="#6528f2"/>
<rect x="412.5" y="212.5" width="25.5" height="25.5" fill="#481fed"/>
<rect x="437.5" y="212.5" width="25.5" height="25.5" fill="#2a17e8"/>
<rect x="462.5" y="212.5" width="25.5" height="25.5" fill="#2313e2"/>
<rect x="487.5" y="212.5" width="25.5" height="25.5" fill="#1c0edc"/>
<rect x="512.5" y="212.5" width="25.5" height="25.5" fill="#1410d2"/>
<rect x="537.5" y="212.5" width="25.5" height="25.5" fill="#0c10c7"/>
<rect x="562.5" y="212.5" width="25.5" height="25.5" fill="#0a10bd"/>
<rect x="587.5" y="212.5" width="85.5" height="25.5" fill="#0810b3"/>
<rect x="-72.5" y="237.5" width="85.5" height="25.5" fill="#f63045"/>
<rect x="12.5" y="237.5" width="25.5" height="25.5" fill="#f02a39"/>
<rect x="37.5" y="237.5" width="25.5" height="25.5" fill="#ea242d"/>
<rect x="62.5" y="237.5" width="25.5" height="25.5" fill="#ea202e"/>
<rect x="87.5" y="237.5" width="25.5" height="25.5" fill="#e91d2f"/>
<rect x="112.5" y="237.5" width="25.5" height="25.5" fill="#ec2236"/>
<rect x="137.5" y="237.5" width="25.5" height="25.5" fill="#f0283d"/>
<rect x="162.5" y="237.5" width="25.5" height="25.5" fill="#f22a56"/>
<rect x="187.5" y="237.5" width="25.5" height="25.5" fill="#f32d6f"/>
<rect x="212.5" y="237.5" width="25.5" height="25.5" fill="#f52e94"/>
<rect x="237.5" y="237.5" width="25.5" height="25.5" fill="#f730b8"/>
<rect x="262.5" y="237.5" width="25.5" height="25.5" fill="#f432d6"/>
<rect x="287.5" y="237.5" width="25.5" height="25.5" fill="#f035f3"/>
<rect x="312.5" y="237.5" width="25.5" height="25.5" fill="#ca33f4"/>
<rect x="337.5" y="237.5" width="25.5" height="25.5" fill="#a431f6"/>
<rect x="362.5" y="237.5" width="25.5" height="25.5" fill="#8232f4"/>
<rect x="387.5" y="237.5" width="25.5" height="25.5" fill="#6032f3"/>
<rect x="412.5" y="237.5" width="25.5" height="25.5" fill="#442af0"/>
<rect x="437.5" y="237.5" width="25.5" height="25.5" fill="#2821ec"/>
<rect x="462.5" y="237.5" width="25.5" height="25.5" fill="#2019e8"/>
<rect x="487.5" y="237.5" width="25.5" height="25.5" fill="#1911e4"/>
<rect x="512.5" y="237.5" width="25.5" height="25.5" fill="#1212da"/>
<rect x="537.5" y="237.5" width="25.5" height="25.5" fill="#0c13cf"/>
<rect x="562.5" y="237.5" width="25.5" height="25.5" fill="#0a14c4"/>
<rect x="587.5" y="237.5" width="85.5" height="25.5" fill="#0816ba"/>
<rect x="-72.5" y="262.5" width="85.5" height="25.5" fill="#eb262e"/>
<rect x="12.5" y="262.5" width="25.5" height="25.5" fill="#e8232a"/>
<rect x="37.5" y="262.5" width="25.5" height="25.5" fill="#e62024"/>
<rect x="62.5" y="262.5" width="25.5" height="25.5" fill="#e6212a"/>
<rect x="87.5" y="262.5" width="25.5" height="25.5" fill="#e8222e"/>
<rect x="112.5" y="262.5" width="25.5" height="25.5" fill="#eb2735"/>
<rect x="137.5" y="262.5" width="25.5" height="25.5" fill="#ee2c3c"/>
<rect x="162.5" y="262.5" width="25.5" height="25.5" fill="#f02f52"/>
<rect x="187.5" y="262.5" width="25.5" height="25.5" fill="#f23269"/>
<rect x="212.5" y="262.5" width="25.5" height="25.5" fill="#f4378c"/>
<rect x="237.5" y="262.5" width="25.5" height="25.5" fill="#f63cb0"/>
<rect x="262.5" y="262.5" width="25.5" height="25.5" fill="#f240d1"/>
<rect x="287.5" y="262.5" width="25.5" height="25.5" fill="#ee45f2"/>
<rect x="312.5" y="262.5" width="25.5" height="25.5" fill="#c43ff4"/>
<rect x="337.5" y="262.5" width="25.5" height="25.5" fill="#9a3af6"/>
<rect x="362.5" y="262.5" width="25.5" height="25.5" fill="#7837f3"/>
<rect x="387.5" y="262.5" width="25.5" height="25.5" fill="#5635f0"/>
<rect x="412.5" y="262.5" width="25.5" height="25.5" fill="#4230ee"/>
<rect x="437.5" y="262.5" width="25.5" height="25.5" fill="#2e2ced"/>
<rect x="462.5" y="262.5" width="25.5" height="25.5" fill="#2625ec"/>
<rect x="487.5" y="262.5" width="25.5" height="25.5" fill="#1e1eea"/>
<rect x="512.5" y="262.5" width="25.5" height="25.5" fill="#161ee2"/>
<rect x="537.5" y="262.5" width="25.5" height="25.5" fill="#0c1eda"/>
<rect x="562.5" y="262.5" width="25.5" height="25.5" fill="#0a1ece"/>
<rect x="587.5" y="262.5" width="85.5" height="25.5" fill="#081fc3"/>
<rect x="-72.5" y="287.5" width="85.5" height="25.5" fill="#e01d18"/>
<rect x="12.5" y="287.5" width="25.5" height="25.5" fill="#e01c1a"/>
<rect x="37.5" y="287.5" width="25.5" height="25.5" fill="#e11c1c"/>
<rect x="62.5" y="287.5" width="25.5" height="25.5" fill="#e42225"/>
<rect x="87.5" y="287.5" width="25.5" height="25.5" fill="#e6272e"/>
<rect x="112.5" y="287.5" width="25.5" height="25.5" fill="#e92b34"/>
<rect x="137.5" y="287.5" width="25.5" height="25.5" fill="#ec2f3a"/>
<rect x="162.5" y="287.5" width="25.5" height="25.5" fill="#ee344e"/>
<rect x="187.5" y="287.5" width="25.5" height="25.5" fill="#f13863"/>
<rect x="212.5" y="287.5" width="25.5" height="25.5" fill="#f34086"/>
<rect x="237.5" y="287.5" width="25.5" height="25.5" fill="#f547a8"/>
<rect x="262.5" y="287.5" width="25.5" height="25.5" fill="#f04ecc"/>
<rect x="287.5" y="287.5" width="25.5" height="25.5" fill="#eb55f1"/>
<rect x="312.5" y="287.5" width="25.5" height="25.5" fill="#be4cf4"/>
<rect x="337.5" y="287.5" width="25.5" height="25.5" fill="#9142f6"/>
<rect x="362.5" y="287.5" width="25.5" height="25.5" fill="#6e3df2"/>
<rect x="387.5" y="287.5" width="25.5" height="25.5" fill="#4c38ed"/>
<rect x="412.5" y="287.5" width="25.5" height="25.5" fill="#4037ee"/>
<rect x="437.5" y="287.5" width="25.5" height="25.5" fill="#3536ee"/>
<rect x="462.5" y="287.5" width="25.5" height="25.5" fill="#2c30ef"/>
<rect x="487.5" y="287.5" width="25.5" height="25.5" fill="#242bf0"/>
<rect x="512.5" y="287.5" width="25.5" height="25.5" fill="#182aea"/>
<rect x="537.5" y="287.5" width="25.5" height="25.5" fill="#0d28e4"/>
<rect x="562.5" y="287.5" width="25.5" height="25.5" fill="#0a28d8"/>
<rect x="587.5" y="287.5" width="85.5" height="25.5" fill="#0828cc"/>
<rect x="-72.5" y="312.5" width="85.5" height="25.5" fill="#e32c1e"/>
<rect x="12.5" y="312.5" width="25.5" height="25.5" fill="#e42f23"/>
<rect x="37.5" y="312.5" width="25.5" height="25.5" fill="#e63228"/>
<rect x="62.5" y="312.5" width="25.5" height="25.5" fill="#e83830"/>
<rect x="87.5" y="312.5" width="25.5" height="25.5" fill="#ea3e38"/>
<rect x="112.5" y="312.5" width="25.5" height="25.5" fill="#ec413d"/>
<rect x="137.5" y="312.5" width="25.5" height="25.5" fill="#ed4442"/>
<rect x="162.5" y="312.5" width="25.5" height="25.5" fill="#ee4651"/>
<rect x="187.5" y="312.5" width="25.5" height="25.5" fill="#ef4860"/>
<rect x="212.5" y="312.5" width="25.5" height="25.5" fill="#f25483"/>
<rect x="237.5" y="312.5" width="25.5" height="25.5" fill="#f560a6"/>
<rect x="262.5" y="312.5" width="25.5" height="25.5" fill="#f068cc"/>
<rect x="287.5" y="312.5" width="25.5" height="25.5" fill="#ec71f2"/>
<rect x="312.5" y="312.5" width="25.5" height="25.5" fill="#be63f2"/>
<rect x="337.5" y="312.5" width="25.5" height="25.5" fill="#9055f2"/>
<rect x="362.5" y="312.5" width="25.5" height="25.5" fill="#6e4ced"/>
<rect x="387.5" y="312.5" width="25.5" height="25.5" fill="#4c42e9"/>
<rect x="412.5" y="312.5" width="25.5" height="25.5" fill="#4142eb"/>
<rect x="437.5" y="312.5" width="25.5" height="25.5" fill="#3642ee"/>
<rect x="462.5" y="312.5" width="25.5" height="25.5" fill="#3143f0"/>
<rect x="487.5" y="312.5" width="25.5" height="25.5" fill="#2c44f2"/>
<rect x="512.5" y="312.5" width="25.5" height="25.5" fill="#1e3eed"/>
<rect x="537.5" y="312.5" width="25.5" height="25.5" fill="#1038e8"/>
<rect x="562.5" y="312.5" width="25.5" height="25.5" fill="#0c35dd"/>
<rect x="587.5" y="312.5" width="85.5" height="25.5" fill="#0932d3"/>
<rect x="-72.5" y="337.5" width="85.5" height="25.5" fill="#e63b23"/>
<rect x="12.5" y="337.5" width="25.5" height="25.5" fill="#e8422c"/>
<rect x="37.5" y="337.5" width="25.5" height="25.5" fill="#ea4935"/>
<rect x="62.5" y="337.5" width="25.5" height="25.5" fill="#ec4e3c"/>
<rect x="87.5" y="337.5" width="25.5" height="25.5" fill="#ef5442"/>
<rect x="112.5" y="337.5" width="25.5" height="25.5" fill="#ee5646"/>
<rect x="137.5" y="337.5" width="25.5" height="25.5" fill="#ee5949"/>
<rect x="162.5" y="337.5" width="25.5" height="25.5" fill="#ee5854"/>
<rect x="187.5" y="337.5" width="25.5" height="25.5" fill="#ed585e"/>
<rect x="212.5" y="337.5" width="25.5" height="25.5" fill="#f16881"/>
<rect x="237.5" y="337.5" width="25.5" height="25.5" fill="#f578a4"/>
<rect x="262.5" y="337.5" width="25.5" height="25.5" fill="#f082cb"/>
<rect x="287.5" y="337.5" width="25.5" height="25.5" fill="#ec8df2"/>
<rect x="312.5" y="337.5" width="25.5" height="25.5" fill="#be7af0"/>
<rect x="337.5" y="337.5" width="25.5" height="25.5" fill="#9068ed"/>
<rect x="362.5" y="337.5" width="25.5" height="25.5" fill="#6e5ae9"/>
<rect x="387.5" y="337.5" width="25.5" height="25.5" fill="#4b4de5"/>
<rect x="412.5" y="337.5" width="25.5" height="25.5" fill="#414ee9"/>
<rect x="437.5" y="337.5" width="25.5" height="25.5" fill="#374eed"/>
<rect x="462.5" y="337.5" width="25.5" height="25.5" fill="#3655f0"/>
<rect x="487.5" y="337.5" width="25.5" height="25.5" fill="#345cf4"/>
<rect x="512.5" y="337.5" width="25.5" height="25.5" fill="#2352f0"/>
<rect x="537.5" y="337.5" width="25.5" height="25.5" fill="#1249ec"/>
<rect x="562.5" y="337.5" width="25.5" height="25.5" fill="#0e42e2"/>
<rect x="587.5" y="337.5" width="85.5" height="25.5" fill="#093bd9"/>
<rect x="-72.5" y="362.5" width="85.5" height="25.5" fill="#e95132"/>
<rect x="12.5" y="362.5" width="25.5" height="25.5" fill="#eb593a"/>
<rect x="37.5" y="362.5" width="25.5" height="25.5" fill="#ed6243"/>
<rect x="62.5" y="362.5" width="25.5" height="25.5" fill="#ee6648"/>
<rect x="87.5" y="362.5" width="25.5" height="25.5" fill="#f06b4d"/>
<rect x="112.5" y="362.5" width="25.5" height="25.5" fill="#ee6c4f"/>
<rect x="137.5" y="362.5" width="25.5" height="25.5" fill="#ed6d50"/>
<rect x="162.5" y="362.5" width="25.5" height="25.5" fill="#ee6d5a"/>
<rect x="187.5" y="362.5" width="25.5" height="25.5" fill="#ee6e62"/>
<rect x="212.5" y="362.5" width="25.5" height="25.5" fill="#f17d84"/>
<rect x="237.5" y="362.5" width="25.5" height="25.5" fill="#f48ca6"/>
<rect x="262.5" y="362.5" width="25.5" height="25.5" fill="#f198cc"/>
<rect x="287.5" y="362.5" width="25.5" height="25.5" fill="#eea4f2"/>
<rect x="312.5" y="362.5" width="25.5" height="25.5" fill="#c08eef"/>
<rect x="337.5" y="362.5" width="25.5" height="25.5" fill="#9478ec"/>
<rect x="362.5" y="362.5" width="25.5" height="25.5" fill="#7268e8"/>
<rect x="387.5" y="362.5" width="25.5" height="25.5" fill="#5059e3"/>
<rect x="412.5" y="362.5" width="25.5" height="25.5" fill="#465ce8"/>
<rect x="437.5" y="362.5" width="25.5" height="25.5" fill="#3c5eec"/>
<rect x="462.5" y="362.5" width="25.5" height="25.5" fill="#3c66f0"/>
<rect x="487.5" y="362.5" width="25.5" height="25.5" fill="#3c6ef4"/>
<rect x="512.5" y="362.5" width="25.5" height="25.5" fill="#2960ef"/>
<rect x="537.5" y="362.5" width="25.5" height="25.5" fill="#1652ea"/>
<rect x="562.5" y="362.5" width="25.5" height="25.5" fill="#124ae1"/>
<rect x="587.5" y="362.5" width="85.5" height="25.5" fill="#0d43d9"/>
<rect x="-72.5" y="387.5" width="85.5" height="85.5" fill="#ec6740"/>
<rect x="12.5" y="387.5" width="25.5" height="85.5" fill="#ee7048"/>
<rect x="37.5" y="387.5" width="25.5" height="85.5" fill="#f07a51"/>
<rect x="62.5" y="387.5" width="25.5" height="85.5" fill="#f07e54"/>
<rect x="87.5" y="387.5" width="25.5" height="85.5" fill="#f08258"/>
<rect x="112.5" y="387.5" width="25.5" height="85.5" fill="#ee8158"/>
<rect x="137.5" y="387.5" width="25.5" height="85.5" fill="#ec8158"/>
<rect x="162.5" y="387.5" width="25.5" height="85.5" fill="#ee825f"/>
<rect x="187.5" y="387.5" width="25.5" height="85.5" fill="#ef8367"/>
<rect x="212.5" y="387.5" width="25.5" height="85.5" fill="#f19187"/>
<rect x="237.5" y="387.5" width="25.5" height="85.5" fill="#f3a0a7"/>
<rect x="262.5" y="387.5" width="25.5" height="85.5" fill="#f1adcc"/>
<rect x="287.5" y="387.5" width="25.5" height="85.5" fill="#efbbf2"/>
<rect x="312.5" y="387.5" width="25.5" height="85.5" fill="#c3a1ef"/>
<rect x="337.5" y="387.5" width="25.5" height="85.5" fill="#9787eb"/>
<rect x="362.5" y="387.5" width="25.5" height="85.5" fill="#7676e6"/>
<rect x="387.5" y="387.5" width="25.5" height="85.5" fill="#5565e1"/>
<rect x="412.5" y="387.5" width="25.5" height="85.5" fill="#4b69e7"/>
<rect x="437.5" y="387.5" width="25.5" height="85.5" fill="#416eec"/>
<rect x="462.5" y="387.5" width="25.5" height="85.5" fill="#4277f0"/>
<rect x="487.5" y="387.5" width="25.5" height="85.5" fill="#4381f4"/>
<rect x="512.5" y="387.5" width="25.5" height="85.5" fill="#2f6eee"/>
<rect x="537.5" y="387.5" width="25.5" height="85.5" fill="#1b5be7"/>
<rect x="562.5" y="387.5" width="25.5" height="85.5" fill="#1552e0"/>
<rect x="587.5" y="387.5" width="85.5" height="85.5" fill="#104ad8"/>
</g>
<use href="#c0" fill="url(#go0)" style="mix-blend-mode:overlay"/>
<use href="#c0" fill="url(#gn0)"/>
<use href="#c1" fill="url(#go1)" style="mix-blend-mode:overlay"/>
<use href="#c1" fill="url(#gn1)"/>
</svg><!-- Recycle bin -->
<svg class="a" style="left:8px;top:2px" width="21" height="22" viewBox="8 2 21 22">
<path d="M9.4,5.6L11,3.6L13.6,4.4L15.4,3.1L18.4,4.2L21,3.2L23.6,4.3L26,3.6L27.2,5.4L24.9,22.4L17.6,22.9L11.7,22.2Z" fill="#dcdee6" opacity=".95"/>
<path d="M9.4,5.6L11,3.6L13.6,4.4L15.4,3.1L18.4,4.2L21,3.2L23.6,4.3L26,3.6L27.2,5.4L18,7.2Z" fill="#f3f4f8"/>
<path d="M18.6,7.2L27.2,5.4L24.9,22.4L18.2,22.9Z" fill="#c9ccd6" opacity=".7"/>
<circle cx="14.6" cy="14.2" r="2.3" fill="none" stroke="#1e8ad6" stroke-width="1.3" stroke-dasharray="3.2 1.6"/>
</svg>
<div class="t" style="left:2.9px;top:27.8px;width:29.6px;text-align:center;font-size:5.5px;color:#fff;text-shadow:0 0.5px 1px rgba(0,0,0,.8);transform:scaleX(.89)">Recycle Bin</div>

<!-- Cortana panel -->
<div class="a" style="left:0;top:108.3px;width:22.6px;height:273px;background:#6e6caa"></div>
<div class="a" style="left:22.6px;top:108.3px;width:149.6px;height:273px;background:#fff"></div>
<div class="a" style="left:23px;top:172.2px;width:149px;height:1px;background:#efeff5"></div>
<div class="a" style="left:22.6px;top:362.6px;width:149.6px;height:18.7px;background:#f6f6fa"></div>
<div class="a" style="left:69.4px;top:190.1px;width:55.2px;height:55.2px;border-radius:50%;background:#b9b7d9"></div>
<div class="a" style="left:83.9px;top:204.6px;width:26.2px;height:26.2px;border-radius:50%;background:#6e6cae"></div>
<div class="t" id="help" style="left:53px;top:278.6px;font-size:9.2px;color:#6e6cab;letter-spacing:-0.11px">How can I help, Brad?</div>
<div class="t" id="listen" style="left:27.4px;top:368.2px;font-size:6.8px;color:#6e6cab">Listening...</div>
<svg class="a" style="left:159px;top:367px" width="9" height="9" viewBox="0 0 9 9"><path d="M1.2,4.5H7.4M4.9,2L7.4,4.5L4.9,7" fill="none" stroke="#9a9aa8" stroke-width="0.8"/></svg>

<!-- sidebar icons -->
<svg class="a" style="left:0;top:108px" width="23" height="273" viewBox="0 108 23 273" fill="none" stroke="#fff" stroke-width="0.9">
<path d="M6.5,117.4H16.2M6.5,119.9H16.2M6.5,122.4H16.2" stroke-width="0.8"/>
<path d="M7.6,142.6L11.2,139.2L14.8,142.6M8.6,141.8V145.8H10.4V143.4H12V145.8H13.8V141.8"/>
<path d="M8.2,161.6H11.6L13.2,163.2V166.8H8.2ZM9.8,166.8V168.5H14.8V164.8L13.2,163.2"/>
<path d="M7.4,184.6H15V190.8H7.4ZM7.4,186.2H15M9.2,183.4V185M13.2,183.4V185"/>
<path d="M11.3,206.9L12.3,209.3L14.9,209.5L12.9,211.2L13.5,213.7L11.3,212.4L9.1,213.7L9.7,211.2L7.7,209.5L10.3,209.3Z" fill="#fff" stroke="none"/>
<path d="M7.2,230.6H15.2V233H7.2ZM7.2,234.4H12.2M7.2,235.8H11M13.6,234.4V236.4"/>
<path d="M9.6,253.2C9.6,251 13,251 13,253.2C13,254.8 11.3,254.8 11.3,256.6M11.3,257.8V258.8" stroke-width="0.9"/>
<circle cx="11.3" cy="277.3" r="2.1" stroke-width="1.5"/>
<path d="M11.3,273.9V274.9M11.3,279.7V280.7M7.9,277.3H8.9M13.7,277.3H14.7M8.9,274.9L9.6,275.6M13,279L13.7,279.7M8.9,279.7L9.6,279M13,275.6L13.7,274.9" stroke-width="1.1"/>
</svg>

<!-- taskbar -->
<div class="a" style="left:0;top:381px;width:600px;height:19px;background:linear-gradient(90deg,#7c5a78 0,#7c5a7c 16.6%,#7a5a82 33.3%,#746098 41.6%,#74709c 50%,#6068a4 58.3%,#4c5ca0 66.6%,#42549e 75%,#3a4c9e 83.3%,#34449a 100%)"></div>
<div class="a" style="left:165px;top:381px;width:71px;height:19px;background:rgba(255,255,255,.025)"></div>
<div class="a" style="left:165px;top:399px;width:71px;height:1px;background:#b9a8d8"></div>
<!-- start -->
<svg class="a" style="left:7px;top:386.6px" width="8.4" height="8" viewBox="0 0 84 80"><path d="M0,11L34,6V38H0ZM38,5.5L84,0V38H38ZM0,42H34V74L0,69ZM38,42H84V80L38,74.5Z" fill="#fff"/></svg>
<div class="a" style="left:29.8px;top:386.9px;width:5.6px;height:5.6px;border:1px solid #fff;border-radius:50%"></div>
<svg class="a" style="left:50px;top:386px" width="12" height="9" viewBox="0 0 12 9" fill="none" stroke="#d8d0dc" stroke-width="0.7"><rect x="3" y="1.6" width="6" height="5.8"/><path d="M1.2,2.6V6.4M10.8,2.6V6.4"/></svg>
<!-- app tiles -->
<div class="a" style="left:74.4px;top:384.5px;width:11.3px;height:11.5px;background:#0f78d4"></div>
<svg class="a" style="left:74.4px;top:384.5px" width="11.3" height="11.5" viewBox="0 0 11.3 11.5"><ellipse cx="5.6" cy="5.4" rx="2.6" ry="2" fill="#fff"/><path d="M4.2,6.6L3.6,8.2L5.6,7.2Z" fill="#fff"/><path d="M4.6,5.4H6.8" stroke="#0f78d4" stroke-width="0.6"/></svg>
<svg class="a" style="left:98.5px;top:386.2px" width="10" height="9" viewBox="0 0 10 9"><path d="M0,0.6H3.4L4.2,1.6H9.6V8.6H0Z" fill="#f4c84a"/><path d="M0,3H9.6V8.6H0Z" fill="#fbe07c"/><path d="M1,4.6H8.6V8.6H1Z" fill="#7ccce0"/></svg>
<div class="a" style="left:121px;top:384.5px;width:11.3px;height:11.5px;background:#0f72c8"></div>
<svg class="a" style="left:121px;top:384.5px" width="11.3" height="11.5" viewBox="0 0 11.3 11.5"><rect x="5" y="3.6" width="4.2" height="4.2" fill="#fff"/><rect x="2.4" y="3" width="4.2" height="5.4" fill="#fff"/><ellipse cx="4.5" cy="5.7" rx="1" ry="1.3" fill="none" stroke="#0f72c8" stroke-width="0.7"/></svg>
<svg class="a" style="left:144.5px;top:385px" width="12" height="11" viewBox="0 0 12 11" fill="none"><path d="M2.6,6H9.4C9.4,1.6 2.8,1.6 2.6,6C2.6,10 8,10 9.2,7.6" stroke="#3cb4e8" stroke-width="1.5"/><path d="M1.4,9.6C-0.6,6 6,0.6 10.6,1.2" stroke="#f4c430" stroke-width="0.7"/></svg>
<div class="a" style="left:167px;top:384.5px;width:11.8px;height:11.5px;background:#107c10"></div>
<svg class="a" style="left:167px;top:384.5px" width="11.8" height="11.5" viewBox="0 0 11.8 11.5"><circle cx="5.9" cy="5.6" r="2.1" fill="#fff"/><path d="M5.9,4.6L4.6,3.4H7.2Z" fill="#107c10"/><path d="M5.9,5.2L4.4,7.4M5.9,5.2L7.4,7.4" stroke="#107c10" stroke-width="0.5"/></svg>
<div class="t" style="left:180.2px;top:387.6px;font-size:6px;color:#fff;transform:scaleX(.88);transform-origin:left">Xbox</div>
<!-- tray -->
<svg class="a" style="left:470px;top:383px" width="100" height="15" viewBox="470 383 100 15" fill="none" stroke="#fff" stroke-width="0.7">
<path d="M477.4,391.6L479,389.8L480.6,391.6Z" fill="#fff" stroke="none"/>
<path d="M491.6,388.2H498.6V392.6H493.6M491.2,389.6H493.4V393.2H491.2Z"/>
<path d="M508,393L512.6,388C510.4,387.4 508.6,388.6 508,390M509.4,393C510,391.4 511.4,390.6 512.8,390.8M511.4,393C511.6,392.4 512.2,392.2 512.8,392.2" stroke-width="0.6"/>
<path d="M523,390.2H524.2L526,388.4V393L524.2,391.4H523Z"/>
<path d="M538.4,386.4H545V391.8H542.8L541.7,393.6L540.6,391.8H538.4Z"/><path d="M539.8,388.2H543.6M539.8,389.8H543.6" stroke-width="0.5"/>
<rect x="551.4" y="387.6" width="10.8" height="5.4" rx="0.6" fill="rgba(255,255,255,.3)"/>
<path d="M552.8,389.4H560.8M552.8,390.8H560.8M554.4,392H559.4" stroke-width="0.5" stroke-dasharray="0.9 0.6"/>
</svg>
<div class="t" style="left:566px;top:384.3px;width:30px;text-align:center;font-size:6.3px;color:#fff;transform:scaleX(.86)">4:35 PM</div>
<div class="t" style="left:563.3px;top:393.2px;width:34px;text-align:center;font-size:6.3px;color:#fff;transform:scaleX(.875)">4/29/2015</div>
<!-- watermark -->
<div class="t" style="right:1.8px;top:365.4px;font-size:6.6px;color:#fff;transform:scaleX(.844);transform-origin:right">Windows 10 Home Insider Preview</div>
<div class="t" style="right:2.4px;top:375px;font-size:6.6px;color:#fff;transform:scaleX(.838);transform-origin:right">Evaluation copy. Build 10074</div>
<svg class="a" style="left:489px;top:362px" width="100" height="30" viewBox="489 362 100 30">
<defs><mask id="nm"><rect x="489" y="362" width="30" height="30" fill="#fff"/><path d="M497.2,384.6V368.2L510.2,382.4V365.6" fill="none" stroke="#000" stroke-width="3" stroke-linejoin="round"/></mask></defs>
<circle cx="503.7" cy="375" r="11.3" fill="#fff" opacity="0.46" mask="url(#nm)"/>
<text x="522.6" y="385.4" font-family="Liberation Sans, sans-serif" font-size="20.4" fill="#fff" opacity="0.56" textLength="62" lengthAdjust="spacingAndGlyphs">Neowin</text>
</svg>

</div></body></html>
